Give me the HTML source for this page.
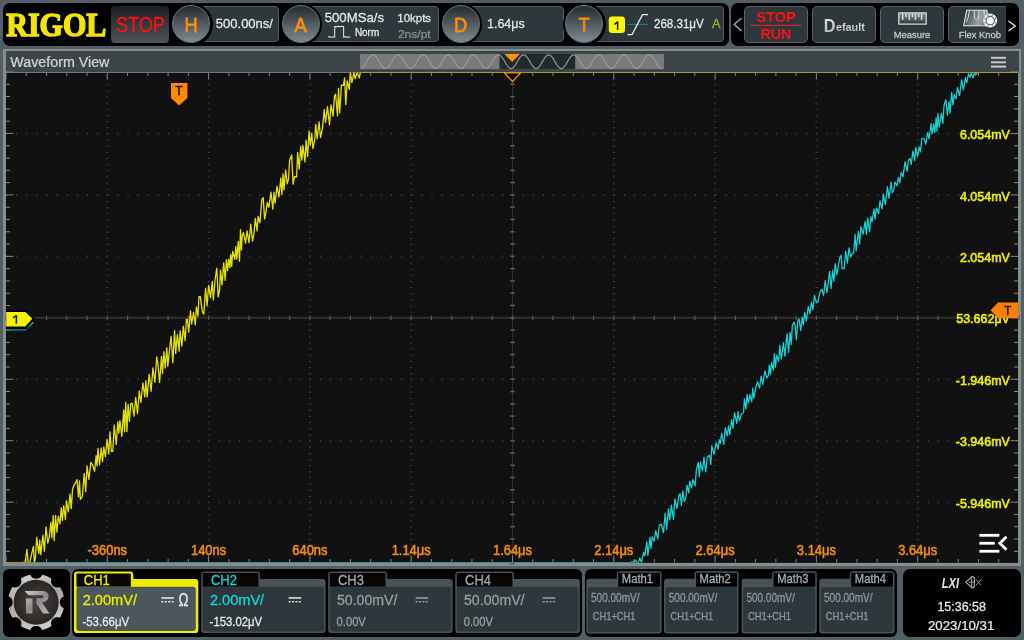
<!DOCTYPE html><html><head><meta charset="utf-8"><title>Rigol Oscilloscope</title><style>
html,body{margin:0;padding:0;}
body{width:1024px;height:640px;overflow:hidden;position:relative;background:#525f65;font-family:"Liberation Sans",sans-serif;}
.a{position:absolute;box-sizing:border-box;}
svg.o{position:absolute;left:0;top:0;width:1024px;height:640px;overflow:visible;will-change:transform;}

</style></head><body>
<div class="a" style="left:3px;top:3px;width:726px;height:42.5px;background:#000;border-radius:7px;"></div>
<div class="a" style="left:731.2px;top:3px;width:287.3px;height:42.5px;background:#000;border-radius:7px;"></div>
<div class="a" style="left:110.5px;top:5.5px;width:58.5px;height:37.5px;border-radius:4px;background:linear-gradient(#1b1f21,#4d5559);"></div>
<div class="a" style="left:198px;top:6px;width:81px;height:36px;border-radius:4px;background:#2e373c;border:1px solid #535e64;"></div>
<div class="a" style="left:290px;top:6px;width:149px;height:36px;border-radius:4px;background:#2e373c;border:1px solid #535e64;"></div>
<div class="a" style="left:450px;top:6px;width:113.5px;height:36px;border-radius:4px;background:#2e373c;border:1px solid #535e64;"></div>
<div class="a" style="left:575px;top:6px;width:148.89999999999998px;height:36px;border-radius:4px;background:#2e373c;border:1px solid #535e64;"></div>
<div class="a" style="left:169.5px;top:2.5px;width:43px;height:43px;border-radius:50%;background:#000;"></div>
<div class="a" style="left:172px;top:5px;width:38px;height:38px;border-radius:50%;background:linear-gradient(#262c30,#7c8a92);border:1px solid #6c777c;"></div>
<div class="a" style="left:279.0px;top:2.5px;width:43px;height:43px;border-radius:50%;background:#000;"></div>
<div class="a" style="left:281.5px;top:5px;width:38px;height:38px;border-radius:50%;background:linear-gradient(#262c30,#7c8a92);border:1px solid #6c777c;"></div>
<div class="a" style="left:439.0px;top:2.5px;width:43px;height:43px;border-radius:50%;background:#000;"></div>
<div class="a" style="left:441.5px;top:5px;width:38px;height:38px;border-radius:50%;background:linear-gradient(#262c30,#7c8a92);border:1px solid #6c777c;"></div>
<div class="a" style="left:562.5px;top:2.5px;width:43px;height:43px;border-radius:50%;background:#000;"></div>
<div class="a" style="left:565px;top:5px;width:38px;height:38px;border-radius:50%;background:linear-gradient(#262c30,#7c8a92);border:1px solid #6c777c;"></div>
<div class="a" style="left:744px;top:5.5px;width:64px;height:37.5px;border-radius:5px;background:#2e373c;border:1px solid #58636a;"></div>
<div class="a" style="left:812px;top:5.5px;width:64px;height:37.5px;border-radius:5px;background:#2e373c;border:1px solid #58636a;"></div>
<div class="a" style="left:880px;top:5.5px;width:64px;height:37.5px;border-radius:5px;background:#2e373c;border:1px solid #58636a;"></div>
<div class="a" style="left:948.4px;top:5.5px;width:65.60000000000002px;height:37.5px;border-radius:5px;background:#2e373c;border:1px solid #58636a;"></div>
<div class="a" style="left:1006px;top:3px;width:12.5px;height:42.5px;background:#000;border-radius:0 7px 7px 0;"></div>
<div class="a" style="left:3px;top:49px;width:1018px;height:516.5px;background:#8a8c8c;"></div>
<div class="a" style="left:5.5px;top:51px;width:1013px;height:21.5px;background:#3e4548;"></div>
<div class="a" style="left:6px;top:72.5px;width:1012px;height:490.5px;background:#111111;"></div>
<div class="a" style="left:3px;top:569px;width:66.5px;height:67.5px;background:#000;border-radius:6px;"></div>
<div class="a" style="left:72px;top:569px;width:509.5px;height:67.5px;background:#000;border-radius:6px;"></div>
<div class="a" style="left:584.5px;top:569px;width:312px;height:67.5px;background:#000;border-radius:6px;"></div>
<div class="a" style="left:902.5px;top:569px;width:118px;height:67.5px;background:#000;border-radius:7px;"></div>
<svg class="o" width="1024" height="640" viewBox="0 0 1024 640">
<line x1="107.30" y1="72.0" x2="107.30" y2="563.6" stroke="#3e3e3e" stroke-width="2" stroke-dasharray="1 5.145"/><line x1="208.60" y1="72.0" x2="208.60" y2="563.6" stroke="#3e3e3e" stroke-width="2" stroke-dasharray="1 5.145"/><line x1="309.90" y1="72.0" x2="309.90" y2="563.6" stroke="#3e3e3e" stroke-width="2" stroke-dasharray="1 5.145"/><line x1="411.20" y1="72.0" x2="411.20" y2="563.6" stroke="#3e3e3e" stroke-width="2" stroke-dasharray="1 5.145"/><line x1="613.80" y1="72.0" x2="613.80" y2="563.6" stroke="#3e3e3e" stroke-width="2" stroke-dasharray="1 5.145"/><line x1="715.10" y1="72.0" x2="715.10" y2="563.6" stroke="#3e3e3e" stroke-width="2" stroke-dasharray="1 5.145"/><line x1="816.40" y1="72.0" x2="816.40" y2="563.6" stroke="#3e3e3e" stroke-width="2" stroke-dasharray="1 5.145"/><line x1="917.70" y1="72.0" x2="917.70" y2="563.6" stroke="#3e3e3e" stroke-width="2" stroke-dasharray="1 5.145"/><line x1="6.0" y1="133.45" x2="1019.0" y2="133.45" stroke="#3e3e3e" stroke-width="2" stroke-dasharray="1 9.130"/><line x1="6.0" y1="194.90" x2="1019.0" y2="194.90" stroke="#3e3e3e" stroke-width="2" stroke-dasharray="1 9.130"/><line x1="6.0" y1="256.35" x2="1019.0" y2="256.35" stroke="#3e3e3e" stroke-width="2" stroke-dasharray="1 9.130"/><line x1="6.0" y1="379.25" x2="1019.0" y2="379.25" stroke="#3e3e3e" stroke-width="2" stroke-dasharray="1 9.130"/><line x1="6.0" y1="440.70" x2="1019.0" y2="440.70" stroke="#3e3e3e" stroke-width="2" stroke-dasharray="1 9.130"/><line x1="6.0" y1="502.15" x2="1019.0" y2="502.15" stroke="#3e3e3e" stroke-width="2" stroke-dasharray="1 9.130"/><line x1="512.50" y1="72.5" x2="512.50" y2="562.5" stroke="#303030" stroke-width="1"/><line x1="6.0" y1="317.80" x2="1018.0" y2="317.80" stroke="#303030" stroke-width="2"/><line x1="6.00" y1="315.50" x2="6.00" y2="320.10" stroke="#585858" stroke-width="1.2"/><line x1="26.26" y1="315.50" x2="26.26" y2="320.10" stroke="#585858" stroke-width="1.2"/><line x1="46.52" y1="315.50" x2="46.52" y2="320.10" stroke="#585858" stroke-width="1.2"/><line x1="66.78" y1="315.50" x2="66.78" y2="320.10" stroke="#585858" stroke-width="1.2"/><line x1="87.04" y1="315.50" x2="87.04" y2="320.10" stroke="#585858" stroke-width="1.2"/><line x1="107.30" y1="315.50" x2="107.30" y2="320.10" stroke="#585858" stroke-width="1.2"/><line x1="127.56" y1="315.50" x2="127.56" y2="320.10" stroke="#585858" stroke-width="1.2"/><line x1="147.82" y1="315.50" x2="147.82" y2="320.10" stroke="#585858" stroke-width="1.2"/><line x1="168.08" y1="315.50" x2="168.08" y2="320.10" stroke="#585858" stroke-width="1.2"/><line x1="188.34" y1="315.50" x2="188.34" y2="320.10" stroke="#585858" stroke-width="1.2"/><line x1="208.60" y1="315.50" x2="208.60" y2="320.10" stroke="#585858" stroke-width="1.2"/><line x1="228.86" y1="315.50" x2="228.86" y2="320.10" stroke="#585858" stroke-width="1.2"/><line x1="249.12" y1="315.50" x2="249.12" y2="320.10" stroke="#585858" stroke-width="1.2"/><line x1="269.38" y1="315.50" x2="269.38" y2="320.10" stroke="#585858" stroke-width="1.2"/><line x1="289.64" y1="315.50" x2="289.64" y2="320.10" stroke="#585858" stroke-width="1.2"/><line x1="309.90" y1="315.50" x2="309.90" y2="320.10" stroke="#585858" stroke-width="1.2"/><line x1="330.16" y1="315.50" x2="330.16" y2="320.10" stroke="#585858" stroke-width="1.2"/><line x1="350.42" y1="315.50" x2="350.42" y2="320.10" stroke="#585858" stroke-width="1.2"/><line x1="370.68" y1="315.50" x2="370.68" y2="320.10" stroke="#585858" stroke-width="1.2"/><line x1="390.94" y1="315.50" x2="390.94" y2="320.10" stroke="#585858" stroke-width="1.2"/><line x1="411.20" y1="315.50" x2="411.20" y2="320.10" stroke="#585858" stroke-width="1.2"/><line x1="431.46" y1="315.50" x2="431.46" y2="320.10" stroke="#585858" stroke-width="1.2"/><line x1="451.72" y1="315.50" x2="451.72" y2="320.10" stroke="#585858" stroke-width="1.2"/><line x1="471.98" y1="315.50" x2="471.98" y2="320.10" stroke="#585858" stroke-width="1.2"/><line x1="492.24" y1="315.50" x2="492.24" y2="320.10" stroke="#585858" stroke-width="1.2"/><line x1="512.50" y1="315.50" x2="512.50" y2="320.10" stroke="#585858" stroke-width="1.2"/><line x1="532.76" y1="315.50" x2="532.76" y2="320.10" stroke="#585858" stroke-width="1.2"/><line x1="553.02" y1="315.50" x2="553.02" y2="320.10" stroke="#585858" stroke-width="1.2"/><line x1="573.28" y1="315.50" x2="573.28" y2="320.10" stroke="#585858" stroke-width="1.2"/><line x1="593.54" y1="315.50" x2="593.54" y2="320.10" stroke="#585858" stroke-width="1.2"/><line x1="613.80" y1="315.50" x2="613.80" y2="320.10" stroke="#585858" stroke-width="1.2"/><line x1="634.06" y1="315.50" x2="634.06" y2="320.10" stroke="#585858" stroke-width="1.2"/><line x1="654.32" y1="315.50" x2="654.32" y2="320.10" stroke="#585858" stroke-width="1.2"/><line x1="674.58" y1="315.50" x2="674.58" y2="320.10" stroke="#585858" stroke-width="1.2"/><line x1="694.84" y1="315.50" x2="694.84" y2="320.10" stroke="#585858" stroke-width="1.2"/><line x1="715.10" y1="315.50" x2="715.10" y2="320.10" stroke="#585858" stroke-width="1.2"/><line x1="735.36" y1="315.50" x2="735.36" y2="320.10" stroke="#585858" stroke-width="1.2"/><line x1="755.62" y1="315.50" x2="755.62" y2="320.10" stroke="#585858" stroke-width="1.2"/><line x1="775.88" y1="315.50" x2="775.88" y2="320.10" stroke="#585858" stroke-width="1.2"/><line x1="796.14" y1="315.50" x2="796.14" y2="320.10" stroke="#585858" stroke-width="1.2"/><line x1="816.40" y1="315.50" x2="816.40" y2="320.10" stroke="#585858" stroke-width="1.2"/><line x1="836.66" y1="315.50" x2="836.66" y2="320.10" stroke="#585858" stroke-width="1.2"/><line x1="856.92" y1="315.50" x2="856.92" y2="320.10" stroke="#585858" stroke-width="1.2"/><line x1="877.18" y1="315.50" x2="877.18" y2="320.10" stroke="#585858" stroke-width="1.2"/><line x1="897.44" y1="315.50" x2="897.44" y2="320.10" stroke="#585858" stroke-width="1.2"/><line x1="917.70" y1="315.50" x2="917.70" y2="320.10" stroke="#585858" stroke-width="1.2"/><line x1="937.96" y1="315.50" x2="937.96" y2="320.10" stroke="#585858" stroke-width="1.2"/><line x1="958.22" y1="315.50" x2="958.22" y2="320.10" stroke="#585858" stroke-width="1.2"/><line x1="978.48" y1="315.50" x2="978.48" y2="320.10" stroke="#585858" stroke-width="1.2"/><line x1="998.74" y1="315.50" x2="998.74" y2="320.10" stroke="#585858" stroke-width="1.2"/><line x1="1019.00" y1="315.50" x2="1019.00" y2="320.10" stroke="#585858" stroke-width="1.2"/><line x1="510.20" y1="72.00" x2="514.80" y2="72.00" stroke="#585858" stroke-width="1.6"/><line x1="510.20" y1="84.29" x2="514.80" y2="84.29" stroke="#585858" stroke-width="1.6"/><line x1="510.20" y1="96.58" x2="514.80" y2="96.58" stroke="#585858" stroke-width="1.6"/><line x1="510.20" y1="108.87" x2="514.80" y2="108.87" stroke="#585858" stroke-width="1.6"/><line x1="510.20" y1="121.16" x2="514.80" y2="121.16" stroke="#585858" stroke-width="1.6"/><line x1="510.20" y1="133.45" x2="514.80" y2="133.45" stroke="#585858" stroke-width="1.6"/><line x1="510.20" y1="145.74" x2="514.80" y2="145.74" stroke="#585858" stroke-width="1.6"/><line x1="510.20" y1="158.03" x2="514.80" y2="158.03" stroke="#585858" stroke-width="1.6"/><line x1="510.20" y1="170.32" x2="514.80" y2="170.32" stroke="#585858" stroke-width="1.6"/><line x1="510.20" y1="182.61" x2="514.80" y2="182.61" stroke="#585858" stroke-width="1.6"/><line x1="510.20" y1="194.90" x2="514.80" y2="194.90" stroke="#585858" stroke-width="1.6"/><line x1="510.20" y1="207.19" x2="514.80" y2="207.19" stroke="#585858" stroke-width="1.6"/><line x1="510.20" y1="219.48" x2="514.80" y2="219.48" stroke="#585858" stroke-width="1.6"/><line x1="510.20" y1="231.77" x2="514.80" y2="231.77" stroke="#585858" stroke-width="1.6"/><line x1="510.20" y1="244.06" x2="514.80" y2="244.06" stroke="#585858" stroke-width="1.6"/><line x1="510.20" y1="256.35" x2="514.80" y2="256.35" stroke="#585858" stroke-width="1.6"/><line x1="510.20" y1="268.64" x2="514.80" y2="268.64" stroke="#585858" stroke-width="1.6"/><line x1="510.20" y1="280.93" x2="514.80" y2="280.93" stroke="#585858" stroke-width="1.6"/><line x1="510.20" y1="293.22" x2="514.80" y2="293.22" stroke="#585858" stroke-width="1.6"/><line x1="510.20" y1="305.51" x2="514.80" y2="305.51" stroke="#585858" stroke-width="1.6"/><line x1="510.20" y1="317.80" x2="514.80" y2="317.80" stroke="#585858" stroke-width="1.6"/><line x1="510.20" y1="330.09" x2="514.80" y2="330.09" stroke="#585858" stroke-width="1.6"/><line x1="510.20" y1="342.38" x2="514.80" y2="342.38" stroke="#585858" stroke-width="1.6"/><line x1="510.20" y1="354.67" x2="514.80" y2="354.67" stroke="#585858" stroke-width="1.6"/><line x1="510.20" y1="366.96" x2="514.80" y2="366.96" stroke="#585858" stroke-width="1.6"/><line x1="510.20" y1="379.25" x2="514.80" y2="379.25" stroke="#585858" stroke-width="1.6"/><line x1="510.20" y1="391.54" x2="514.80" y2="391.54" stroke="#585858" stroke-width="1.6"/><line x1="510.20" y1="403.83" x2="514.80" y2="403.83" stroke="#585858" stroke-width="1.6"/><line x1="510.20" y1="416.12" x2="514.80" y2="416.12" stroke="#585858" stroke-width="1.6"/><line x1="510.20" y1="428.41" x2="514.80" y2="428.41" stroke="#585858" stroke-width="1.6"/><line x1="510.20" y1="440.70" x2="514.80" y2="440.70" stroke="#585858" stroke-width="1.6"/><line x1="510.20" y1="452.99" x2="514.80" y2="452.99" stroke="#585858" stroke-width="1.6"/><line x1="510.20" y1="465.28" x2="514.80" y2="465.28" stroke="#585858" stroke-width="1.6"/><line x1="510.20" y1="477.57" x2="514.80" y2="477.57" stroke="#585858" stroke-width="1.6"/><line x1="510.20" y1="489.86" x2="514.80" y2="489.86" stroke="#585858" stroke-width="1.6"/><line x1="510.20" y1="502.15" x2="514.80" y2="502.15" stroke="#585858" stroke-width="1.6"/><line x1="510.20" y1="514.44" x2="514.80" y2="514.44" stroke="#585858" stroke-width="1.6"/><line x1="510.20" y1="526.73" x2="514.80" y2="526.73" stroke="#585858" stroke-width="1.6"/><line x1="510.20" y1="539.02" x2="514.80" y2="539.02" stroke="#585858" stroke-width="1.6"/><line x1="510.20" y1="551.31" x2="514.80" y2="551.31" stroke="#585858" stroke-width="1.6"/><line x1="510.20" y1="563.60" x2="514.80" y2="563.60" stroke="#585858" stroke-width="1.6"/><line x1="6.00" y1="72.5" x2="6.00" y2="79.50" stroke="#858585" stroke-width="1"/><line x1="6.00" y1="562.5" x2="6.00" y2="555.50" stroke="#858585" stroke-width="1"/><line x1="26.26" y1="72.5" x2="26.26" y2="76.00" stroke="#858585" stroke-width="1"/><line x1="26.26" y1="562.5" x2="26.26" y2="559.00" stroke="#858585" stroke-width="1"/><line x1="46.52" y1="72.5" x2="46.52" y2="76.00" stroke="#858585" stroke-width="1"/><line x1="46.52" y1="562.5" x2="46.52" y2="559.00" stroke="#858585" stroke-width="1"/><line x1="66.78" y1="72.5" x2="66.78" y2="76.00" stroke="#858585" stroke-width="1"/><line x1="66.78" y1="562.5" x2="66.78" y2="559.00" stroke="#858585" stroke-width="1"/><line x1="87.04" y1="72.5" x2="87.04" y2="76.00" stroke="#858585" stroke-width="1"/><line x1="87.04" y1="562.5" x2="87.04" y2="559.00" stroke="#858585" stroke-width="1"/><line x1="107.30" y1="72.5" x2="107.30" y2="79.50" stroke="#858585" stroke-width="1"/><line x1="107.30" y1="562.5" x2="107.30" y2="555.50" stroke="#858585" stroke-width="1"/><line x1="127.56" y1="72.5" x2="127.56" y2="76.00" stroke="#858585" stroke-width="1"/><line x1="127.56" y1="562.5" x2="127.56" y2="559.00" stroke="#858585" stroke-width="1"/><line x1="147.82" y1="72.5" x2="147.82" y2="76.00" stroke="#858585" stroke-width="1"/><line x1="147.82" y1="562.5" x2="147.82" y2="559.00" stroke="#858585" stroke-width="1"/><line x1="168.08" y1="72.5" x2="168.08" y2="76.00" stroke="#858585" stroke-width="1"/><line x1="168.08" y1="562.5" x2="168.08" y2="559.00" stroke="#858585" stroke-width="1"/><line x1="188.34" y1="72.5" x2="188.34" y2="76.00" stroke="#858585" stroke-width="1"/><line x1="188.34" y1="562.5" x2="188.34" y2="559.00" stroke="#858585" stroke-width="1"/><line x1="208.60" y1="72.5" x2="208.60" y2="79.50" stroke="#858585" stroke-width="1"/><line x1="208.60" y1="562.5" x2="208.60" y2="555.50" stroke="#858585" stroke-width="1"/><line x1="228.86" y1="72.5" x2="228.86" y2="76.00" stroke="#858585" stroke-width="1"/><line x1="228.86" y1="562.5" x2="228.86" y2="559.00" stroke="#858585" stroke-width="1"/><line x1="249.12" y1="72.5" x2="249.12" y2="76.00" stroke="#858585" stroke-width="1"/><line x1="249.12" y1="562.5" x2="249.12" y2="559.00" stroke="#858585" stroke-width="1"/><line x1="269.38" y1="72.5" x2="269.38" y2="76.00" stroke="#858585" stroke-width="1"/><line x1="269.38" y1="562.5" x2="269.38" y2="559.00" stroke="#858585" stroke-width="1"/><line x1="289.64" y1="72.5" x2="289.64" y2="76.00" stroke="#858585" stroke-width="1"/><line x1="289.64" y1="562.5" x2="289.64" y2="559.00" stroke="#858585" stroke-width="1"/><line x1="309.90" y1="72.5" x2="309.90" y2="79.50" stroke="#858585" stroke-width="1"/><line x1="309.90" y1="562.5" x2="309.90" y2="555.50" stroke="#858585" stroke-width="1"/><line x1="330.16" y1="72.5" x2="330.16" y2="76.00" stroke="#858585" stroke-width="1"/><line x1="330.16" y1="562.5" x2="330.16" y2="559.00" stroke="#858585" stroke-width="1"/><line x1="350.42" y1="72.5" x2="350.42" y2="76.00" stroke="#858585" stroke-width="1"/><line x1="350.42" y1="562.5" x2="350.42" y2="559.00" stroke="#858585" stroke-width="1"/><line x1="370.68" y1="72.5" x2="370.68" y2="76.00" stroke="#858585" stroke-width="1"/><line x1="370.68" y1="562.5" x2="370.68" y2="559.00" stroke="#858585" stroke-width="1"/><line x1="390.94" y1="72.5" x2="390.94" y2="76.00" stroke="#858585" stroke-width="1"/><line x1="390.94" y1="562.5" x2="390.94" y2="559.00" stroke="#858585" stroke-width="1"/><line x1="411.20" y1="72.5" x2="411.20" y2="79.50" stroke="#858585" stroke-width="1"/><line x1="411.20" y1="562.5" x2="411.20" y2="555.50" stroke="#858585" stroke-width="1"/><line x1="431.46" y1="72.5" x2="431.46" y2="76.00" stroke="#858585" stroke-width="1"/><line x1="431.46" y1="562.5" x2="431.46" y2="559.00" stroke="#858585" stroke-width="1"/><line x1="451.72" y1="72.5" x2="451.72" y2="76.00" stroke="#858585" stroke-width="1"/><line x1="451.72" y1="562.5" x2="451.72" y2="559.00" stroke="#858585" stroke-width="1"/><line x1="471.98" y1="72.5" x2="471.98" y2="76.00" stroke="#858585" stroke-width="1"/><line x1="471.98" y1="562.5" x2="471.98" y2="559.00" stroke="#858585" stroke-width="1"/><line x1="492.24" y1="72.5" x2="492.24" y2="76.00" stroke="#858585" stroke-width="1"/><line x1="492.24" y1="562.5" x2="492.24" y2="559.00" stroke="#858585" stroke-width="1"/><line x1="512.50" y1="72.5" x2="512.50" y2="79.50" stroke="#858585" stroke-width="1"/><line x1="512.50" y1="562.5" x2="512.50" y2="555.50" stroke="#858585" stroke-width="1"/><line x1="532.76" y1="72.5" x2="532.76" y2="76.00" stroke="#858585" stroke-width="1"/><line x1="532.76" y1="562.5" x2="532.76" y2="559.00" stroke="#858585" stroke-width="1"/><line x1="553.02" y1="72.5" x2="553.02" y2="76.00" stroke="#858585" stroke-width="1"/><line x1="553.02" y1="562.5" x2="553.02" y2="559.00" stroke="#858585" stroke-width="1"/><line x1="573.28" y1="72.5" x2="573.28" y2="76.00" stroke="#858585" stroke-width="1"/><line x1="573.28" y1="562.5" x2="573.28" y2="559.00" stroke="#858585" stroke-width="1"/><line x1="593.54" y1="72.5" x2="593.54" y2="76.00" stroke="#858585" stroke-width="1"/><line x1="593.54" y1="562.5" x2="593.54" y2="559.00" stroke="#858585" stroke-width="1"/><line x1="613.80" y1="72.5" x2="613.80" y2="79.50" stroke="#858585" stroke-width="1"/><line x1="613.80" y1="562.5" x2="613.80" y2="555.50" stroke="#858585" stroke-width="1"/><line x1="634.06" y1="72.5" x2="634.06" y2="76.00" stroke="#858585" stroke-width="1"/><line x1="634.06" y1="562.5" x2="634.06" y2="559.00" stroke="#858585" stroke-width="1"/><line x1="654.32" y1="72.5" x2="654.32" y2="76.00" stroke="#858585" stroke-width="1"/><line x1="654.32" y1="562.5" x2="654.32" y2="559.00" stroke="#858585" stroke-width="1"/><line x1="674.58" y1="72.5" x2="674.58" y2="76.00" stroke="#858585" stroke-width="1"/><line x1="674.58" y1="562.5" x2="674.58" y2="559.00" stroke="#858585" stroke-width="1"/><line x1="694.84" y1="72.5" x2="694.84" y2="76.00" stroke="#858585" stroke-width="1"/><line x1="694.84" y1="562.5" x2="694.84" y2="559.00" stroke="#858585" stroke-width="1"/><line x1="715.10" y1="72.5" x2="715.10" y2="79.50" stroke="#858585" stroke-width="1"/><line x1="715.10" y1="562.5" x2="715.10" y2="555.50" stroke="#858585" stroke-width="1"/><line x1="735.36" y1="72.5" x2="735.36" y2="76.00" stroke="#858585" stroke-width="1"/><line x1="735.36" y1="562.5" x2="735.36" y2="559.00" stroke="#858585" stroke-width="1"/><line x1="755.62" y1="72.5" x2="755.62" y2="76.00" stroke="#858585" stroke-width="1"/><line x1="755.62" y1="562.5" x2="755.62" y2="559.00" stroke="#858585" stroke-width="1"/><line x1="775.88" y1="72.5" x2="775.88" y2="76.00" stroke="#858585" stroke-width="1"/><line x1="775.88" y1="562.5" x2="775.88" y2="559.00" stroke="#858585" stroke-width="1"/><line x1="796.14" y1="72.5" x2="796.14" y2="76.00" stroke="#858585" stroke-width="1"/><line x1="796.14" y1="562.5" x2="796.14" y2="559.00" stroke="#858585" stroke-width="1"/><line x1="816.40" y1="72.5" x2="816.40" y2="79.50" stroke="#858585" stroke-width="1"/><line x1="816.40" y1="562.5" x2="816.40" y2="555.50" stroke="#858585" stroke-width="1"/><line x1="836.66" y1="72.5" x2="836.66" y2="76.00" stroke="#858585" stroke-width="1"/><line x1="836.66" y1="562.5" x2="836.66" y2="559.00" stroke="#858585" stroke-width="1"/><line x1="856.92" y1="72.5" x2="856.92" y2="76.00" stroke="#858585" stroke-width="1"/><line x1="856.92" y1="562.5" x2="856.92" y2="559.00" stroke="#858585" stroke-width="1"/><line x1="877.18" y1="72.5" x2="877.18" y2="76.00" stroke="#858585" stroke-width="1"/><line x1="877.18" y1="562.5" x2="877.18" y2="559.00" stroke="#858585" stroke-width="1"/><line x1="897.44" y1="72.5" x2="897.44" y2="76.00" stroke="#858585" stroke-width="1"/><line x1="897.44" y1="562.5" x2="897.44" y2="559.00" stroke="#858585" stroke-width="1"/><line x1="917.70" y1="72.5" x2="917.70" y2="79.50" stroke="#858585" stroke-width="1"/><line x1="917.70" y1="562.5" x2="917.70" y2="555.50" stroke="#858585" stroke-width="1"/><line x1="937.96" y1="72.5" x2="937.96" y2="76.00" stroke="#858585" stroke-width="1"/><line x1="937.96" y1="562.5" x2="937.96" y2="559.00" stroke="#858585" stroke-width="1"/><line x1="958.22" y1="72.5" x2="958.22" y2="76.00" stroke="#858585" stroke-width="1"/><line x1="958.22" y1="562.5" x2="958.22" y2="559.00" stroke="#858585" stroke-width="1"/><line x1="978.48" y1="72.5" x2="978.48" y2="76.00" stroke="#858585" stroke-width="1"/><line x1="978.48" y1="562.5" x2="978.48" y2="559.00" stroke="#858585" stroke-width="1"/><line x1="998.74" y1="72.5" x2="998.74" y2="76.00" stroke="#858585" stroke-width="1"/><line x1="998.74" y1="562.5" x2="998.74" y2="559.00" stroke="#858585" stroke-width="1"/><line x1="1019.00" y1="72.5" x2="1019.00" y2="79.50" stroke="#858585" stroke-width="1"/><line x1="1019.00" y1="562.5" x2="1019.00" y2="555.50" stroke="#858585" stroke-width="1"/><line x1="6.0" y1="72.00" x2="13.50" y2="72.00" stroke="#858585" stroke-width="1"/><line x1="1018.0" y1="72.00" x2="1010.50" y2="72.00" stroke="#858585" stroke-width="1"/><line x1="6.0" y1="84.29" x2="10.00" y2="84.29" stroke="#858585" stroke-width="1"/><line x1="1018.0" y1="84.29" x2="1014.00" y2="84.29" stroke="#858585" stroke-width="1"/><line x1="6.0" y1="96.58" x2="10.00" y2="96.58" stroke="#858585" stroke-width="1"/><line x1="1018.0" y1="96.58" x2="1014.00" y2="96.58" stroke="#858585" stroke-width="1"/><line x1="6.0" y1="108.87" x2="10.00" y2="108.87" stroke="#858585" stroke-width="1"/><line x1="1018.0" y1="108.87" x2="1014.00" y2="108.87" stroke="#858585" stroke-width="1"/><line x1="6.0" y1="121.16" x2="10.00" y2="121.16" stroke="#858585" stroke-width="1"/><line x1="1018.0" y1="121.16" x2="1014.00" y2="121.16" stroke="#858585" stroke-width="1"/><line x1="6.0" y1="133.45" x2="13.50" y2="133.45" stroke="#858585" stroke-width="1"/><line x1="1018.0" y1="133.45" x2="1010.50" y2="133.45" stroke="#858585" stroke-width="1"/><line x1="6.0" y1="145.74" x2="10.00" y2="145.74" stroke="#858585" stroke-width="1"/><line x1="1018.0" y1="145.74" x2="1014.00" y2="145.74" stroke="#858585" stroke-width="1"/><line x1="6.0" y1="158.03" x2="10.00" y2="158.03" stroke="#858585" stroke-width="1"/><line x1="1018.0" y1="158.03" x2="1014.00" y2="158.03" stroke="#858585" stroke-width="1"/><line x1="6.0" y1="170.32" x2="10.00" y2="170.32" stroke="#858585" stroke-width="1"/><line x1="1018.0" y1="170.32" x2="1014.00" y2="170.32" stroke="#858585" stroke-width="1"/><line x1="6.0" y1="182.61" x2="10.00" y2="182.61" stroke="#858585" stroke-width="1"/><line x1="1018.0" y1="182.61" x2="1014.00" y2="182.61" stroke="#858585" stroke-width="1"/><line x1="6.0" y1="194.90" x2="13.50" y2="194.90" stroke="#858585" stroke-width="1"/><line x1="1018.0" y1="194.90" x2="1010.50" y2="194.90" stroke="#858585" stroke-width="1"/><line x1="6.0" y1="207.19" x2="10.00" y2="207.19" stroke="#858585" stroke-width="1"/><line x1="1018.0" y1="207.19" x2="1014.00" y2="207.19" stroke="#858585" stroke-width="1"/><line x1="6.0" y1="219.48" x2="10.00" y2="219.48" stroke="#858585" stroke-width="1"/><line x1="1018.0" y1="219.48" x2="1014.00" y2="219.48" stroke="#858585" stroke-width="1"/><line x1="6.0" y1="231.77" x2="10.00" y2="231.77" stroke="#858585" stroke-width="1"/><line x1="1018.0" y1="231.77" x2="1014.00" y2="231.77" stroke="#858585" stroke-width="1"/><line x1="6.0" y1="244.06" x2="10.00" y2="244.06" stroke="#858585" stroke-width="1"/><line x1="1018.0" y1="244.06" x2="1014.00" y2="244.06" stroke="#858585" stroke-width="1"/><line x1="6.0" y1="256.35" x2="13.50" y2="256.35" stroke="#858585" stroke-width="1"/><line x1="1018.0" y1="256.35" x2="1010.50" y2="256.35" stroke="#858585" stroke-width="1"/><line x1="6.0" y1="268.64" x2="10.00" y2="268.64" stroke="#858585" stroke-width="1"/><line x1="1018.0" y1="268.64" x2="1014.00" y2="268.64" stroke="#858585" stroke-width="1"/><line x1="6.0" y1="280.93" x2="10.00" y2="280.93" stroke="#858585" stroke-width="1"/><line x1="1018.0" y1="280.93" x2="1014.00" y2="280.93" stroke="#858585" stroke-width="1"/><line x1="6.0" y1="293.22" x2="10.00" y2="293.22" stroke="#858585" stroke-width="1"/><line x1="1018.0" y1="293.22" x2="1014.00" y2="293.22" stroke="#858585" stroke-width="1"/><line x1="6.0" y1="305.51" x2="10.00" y2="305.51" stroke="#858585" stroke-width="1"/><line x1="1018.0" y1="305.51" x2="1014.00" y2="305.51" stroke="#858585" stroke-width="1"/><line x1="6.0" y1="317.80" x2="13.50" y2="317.80" stroke="#858585" stroke-width="1"/><line x1="1018.0" y1="317.80" x2="1010.50" y2="317.80" stroke="#858585" stroke-width="1"/><line x1="6.0" y1="330.09" x2="10.00" y2="330.09" stroke="#858585" stroke-width="1"/><line x1="1018.0" y1="330.09" x2="1014.00" y2="330.09" stroke="#858585" stroke-width="1"/><line x1="6.0" y1="342.38" x2="10.00" y2="342.38" stroke="#858585" stroke-width="1"/><line x1="1018.0" y1="342.38" x2="1014.00" y2="342.38" stroke="#858585" stroke-width="1"/><line x1="6.0" y1="354.67" x2="10.00" y2="354.67" stroke="#858585" stroke-width="1"/><line x1="1018.0" y1="354.67" x2="1014.00" y2="354.67" stroke="#858585" stroke-width="1"/><line x1="6.0" y1="366.96" x2="10.00" y2="366.96" stroke="#858585" stroke-width="1"/><line x1="1018.0" y1="366.96" x2="1014.00" y2="366.96" stroke="#858585" stroke-width="1"/><line x1="6.0" y1="379.25" x2="13.50" y2="379.25" stroke="#858585" stroke-width="1"/><line x1="1018.0" y1="379.25" x2="1010.50" y2="379.25" stroke="#858585" stroke-width="1"/><line x1="6.0" y1="391.54" x2="10.00" y2="391.54" stroke="#858585" stroke-width="1"/><line x1="1018.0" y1="391.54" x2="1014.00" y2="391.54" stroke="#858585" stroke-width="1"/><line x1="6.0" y1="403.83" x2="10.00" y2="403.83" stroke="#858585" stroke-width="1"/><line x1="1018.0" y1="403.83" x2="1014.00" y2="403.83" stroke="#858585" stroke-width="1"/><line x1="6.0" y1="416.12" x2="10.00" y2="416.12" stroke="#858585" stroke-width="1"/><line x1="1018.0" y1="416.12" x2="1014.00" y2="416.12" stroke="#858585" stroke-width="1"/><line x1="6.0" y1="428.41" x2="10.00" y2="428.41" stroke="#858585" stroke-width="1"/><line x1="1018.0" y1="428.41" x2="1014.00" y2="428.41" stroke="#858585" stroke-width="1"/><line x1="6.0" y1="440.70" x2="13.50" y2="440.70" stroke="#858585" stroke-width="1"/><line x1="1018.0" y1="440.70" x2="1010.50" y2="440.70" stroke="#858585" stroke-width="1"/><line x1="6.0" y1="452.99" x2="10.00" y2="452.99" stroke="#858585" stroke-width="1"/><line x1="1018.0" y1="452.99" x2="1014.00" y2="452.99" stroke="#858585" stroke-width="1"/><line x1="6.0" y1="465.28" x2="10.00" y2="465.28" stroke="#858585" stroke-width="1"/><line x1="1018.0" y1="465.28" x2="1014.00" y2="465.28" stroke="#858585" stroke-width="1"/><line x1="6.0" y1="477.57" x2="10.00" y2="477.57" stroke="#858585" stroke-width="1"/><line x1="1018.0" y1="477.57" x2="1014.00" y2="477.57" stroke="#858585" stroke-width="1"/><line x1="6.0" y1="489.86" x2="10.00" y2="489.86" stroke="#858585" stroke-width="1"/><line x1="1018.0" y1="489.86" x2="1014.00" y2="489.86" stroke="#858585" stroke-width="1"/><line x1="6.0" y1="502.15" x2="13.50" y2="502.15" stroke="#858585" stroke-width="1"/><line x1="1018.0" y1="502.15" x2="1010.50" y2="502.15" stroke="#858585" stroke-width="1"/><line x1="6.0" y1="514.44" x2="10.00" y2="514.44" stroke="#858585" stroke-width="1"/><line x1="1018.0" y1="514.44" x2="1014.00" y2="514.44" stroke="#858585" stroke-width="1"/><line x1="6.0" y1="526.73" x2="10.00" y2="526.73" stroke="#858585" stroke-width="1"/><line x1="1018.0" y1="526.73" x2="1014.00" y2="526.73" stroke="#858585" stroke-width="1"/><line x1="6.0" y1="539.02" x2="10.00" y2="539.02" stroke="#858585" stroke-width="1"/><line x1="1018.0" y1="539.02" x2="1014.00" y2="539.02" stroke="#858585" stroke-width="1"/><line x1="6.0" y1="551.31" x2="10.00" y2="551.31" stroke="#858585" stroke-width="1"/><line x1="1018.0" y1="551.31" x2="1014.00" y2="551.31" stroke="#858585" stroke-width="1"/><line x1="6.0" y1="563.60" x2="13.50" y2="563.60" stroke="#858585" stroke-width="1"/><line x1="1018.0" y1="563.60" x2="1010.50" y2="563.60" stroke="#858585" stroke-width="1"/><line x1="6.0" y1="72.5" x2="1018.0" y2="72.5" stroke="#9a9a9a" stroke-width="1"/><defs><clipPath id="pclip"><rect x="6.0" y="72.0" width="1012.0" height="491.0"/></clipPath></defs><polyline points="6.0,562.6 7.1,562.6 8.7,562.6 9.7,562.6 11.0,562.6 12.5,562.6 13.8,562.6 15.8,562.6 17.2,562.6 18.4,562.6 20.2,562.6 22.0,562.6 24.1,562.6 25.2,562.6 26.8,562.6 28.5,562.6 30.2,562.6 32.4,562.6 34.2,562.6 35.6,562.6 37.1,562.6 39.0,562.6 41.1,562.6 43.2,562.6 44.7,562.6 45.9,562.6 47.4,562.6 48.9,562.6 50.8,562.6 51.8,562.6 53.8,562.6 55.6,562.6 56.7,562.6 57.9,562.6 60.0,562.6 61.4,562.6 63.6,562.6 64.7,562.6 65.9,562.6 67.0,562.6 69.2,562.6 70.6,562.6 72.6,562.6 74.8,562.6 76.7,562.6 77.7,562.6 79.6,562.6 81.8,562.6 83.0,562.6 85.2,562.6 87.1,562.6 89.1,562.6 91.1,562.6 92.5,562.6 93.7,562.6 95.7,562.6 97.5,562.6 98.5,562.6 100.6,562.6 101.9,562.6 103.6,562.6 105.7,562.6 107.8,562.6 109.5,562.6 110.7,562.6 112.2,562.6 113.9,562.6 115.5,562.6 117.1,562.6 118.7,562.6 120.5,562.6 122.7,562.6 124.0,562.6 125.1,562.6 126.4,562.6 128.5,562.6 129.6,562.6 131.8,562.6 133.8,562.6 135.2,562.6 136.2,562.6 137.6,562.6 139.8,562.6 141.1,562.6 142.2,562.6 143.5,562.6 145.4,562.6 146.9,562.6 148.9,562.6 150.9,562.6 153.1,562.6 154.4,562.6 155.6,562.6 156.9,562.6 157.9,562.6 159.6,562.6 160.7,562.6 162.7,562.6 164.9,562.6 166.7,562.6 167.8,562.6 169.0,562.6 170.8,562.6 172.3,562.6 174.5,562.6 176.7,562.6 178.2,562.6 179.8,562.6 181.2,562.6 182.5,562.6 184.3,562.6 185.7,562.6 187.5,562.6 189.2,562.6 190.9,562.6 192.9,562.6 194.7,562.6 196.1,562.6 197.9,562.6 198.9,562.6 200.5,562.6 201.8,562.6 203.0,562.6 204.5,562.6 206.2,562.6 207.5,562.6 208.5,562.6 210.3,562.6 211.9,562.6 213.1,562.6 214.6,562.6 216.0,562.6 217.7,562.6 218.8,562.6 220.6,562.6 221.6,562.6 223.0,562.6 225.0,562.6 226.1,562.6 227.5,562.6 229.2,562.6 230.2,562.6 232.4,562.6 233.6,562.6 235.6,562.6 237.2,562.6 238.8,562.6 239.8,562.6 241.2,562.6 242.5,562.6 243.9,562.6 246.1,562.6 248.3,562.6 249.4,562.6 250.7,562.6 252.2,562.6 253.5,562.6 254.7,562.6 255.9,562.6 257.4,562.6 258.4,562.6 260.0,562.6 262.1,562.6 263.4,562.6 265.2,562.6 267.2,562.6 269.1,562.6 270.5,562.6 272.3,562.6 274.1,562.6 275.0,562.6 276.8,562.6 278.1,562.6 279.1,562.6 280.4,562.6 281.4,562.6 282.6,562.6 283.8,562.6 285.1,562.6 287.2,562.6 288.7,562.6 290.2,562.6 291.2,562.6 293.3,562.6 294.7,562.6 295.7,562.6 297.1,562.6 298.5,562.6 299.7,562.6 301.2,562.6 303.4,562.6 304.4,562.6 305.4,562.6 306.7,562.6 308.0,562.6 309.9,562.6 311.8,562.6 312.8,562.6 315.0,562.6 316.5,562.6 318.4,562.6 319.8,562.6 320.9,562.6 321.9,562.6 324.1,562.6 325.2,562.6 326.7,562.6 328.6,562.6 329.7,562.6 331.1,562.6 332.4,562.6 333.8,562.6 335.0,562.6 336.1,562.6 338.3,562.6 339.5,562.6 340.9,562.6 342.8,562.6 344.6,562.6 345.8,562.6 347.0,562.6 348.2,562.6 349.9,562.6 351.6,562.6 353.4,562.6 355.6,562.6 357.1,562.6 358.3,562.6 360.4,562.6 362.5,562.6 364.2,562.6 365.9,562.6 367.2,562.6 368.8,562.6 370.0,562.6 371.0,562.6 372.7,562.6 374.0,562.6 375.2,562.6 376.6,562.6 378.7,562.6 379.7,562.6 381.4,562.6 383.1,562.6 384.6,562.6 385.9,562.6 387.1,562.6 388.6,562.6 389.6,562.6 391.6,562.6 393.0,562.6 395.2,562.6 397.5,562.6 398.6,562.6 400.0,562.6 401.4,562.6 403.5,562.6 404.9,562.6 407.0,562.6 409.0,562.6 410.4,562.6 412.5,562.6 414.0,562.6 415.7,562.6 416.8,562.6 418.1,562.6 419.9,562.6 421.1,562.6 423.2,562.6 424.2,562.6 425.6,562.6 426.8,562.6 429.0,562.6 430.8,562.6 432.1,562.6 433.5,562.6 435.4,562.6 437.0,562.6 439.0,562.6 440.1,562.6 441.9,562.6 443.2,562.6 445.1,562.6 446.7,562.6 447.8,562.6 449.7,562.6 451.0,562.6 452.6,562.6 453.8,562.6 455.1,562.6 456.5,562.6 458.6,562.6 460.8,562.6 462.9,562.6 464.2,562.6 466.4,562.6 468.5,562.6 469.5,562.6 471.4,562.6 473.4,562.6 475.5,562.6 476.7,562.6 478.7,562.6 480.0,562.6 481.3,562.6 482.6,562.6 483.9,562.6 485.7,562.6 487.6,562.6 488.9,562.6 490.0,562.6 492.3,562.6 494.2,562.6 496.3,562.6 497.5,562.6 499.3,562.6 501.2,562.6 502.7,562.6 503.7,562.6 505.3,562.6 506.8,562.6 508.6,562.6 510.7,562.6 512.2,562.6 513.7,562.6 515.1,562.6 516.3,562.6 517.4,562.6 519.3,562.6 520.8,562.6 522.3,562.6 523.5,562.6 525.5,562.6 527.0,562.6 528.9,562.6 530.9,562.6 532.9,562.6 534.8,562.6 536.5,562.6 538.4,562.6 540.0,562.6 542.1,562.6 543.6,562.6 545.2,562.6 546.8,562.6 548.7,562.6 550.3,562.6 552.2,562.6 554.4,562.6 555.9,562.6 557.7,562.6 559.6,562.6 561.6,562.6 563.6,562.6 565.3,562.6 567.0,562.6 568.4,562.6 569.8,562.6 571.1,562.6 573.0,562.6 574.5,562.6 576.0,562.6 578.0,562.6 580.0,562.6 582.2,562.6 583.3,562.6 584.5,562.6 586.6,562.6 588.7,562.6 590.5,562.6 592.6,562.6 593.8,562.6 594.9,562.6 597.0,562.6 598.6,562.6 600.1,562.6 601.9,562.6 604.1,562.6 605.6,562.6 607.4,562.6 609.0,562.6 610.5,562.6 611.8,562.6 613.1,562.6 615.1,562.6 616.8,562.6 618.7,562.6 620.0,562.6 621.8,562.6 623.5,562.6 625.3,562.6 626.8,562.6 627.8,562.6 629.2,562.6 630.5,562.6 632.0,561.8 633.7,562.6 635.4,560.2 636.9,562.6 638.4,562.6 639.7,558.0 641.5,562.6 643.6,552.3 644.9,555.9 646.8,541.9 647.9,555.4 650.0,537.2 651.0,548.4 652.1,536.7 654.1,541.3 655.8,530.6 657.8,539.0 659.3,525.2 661.3,524.1 663.5,532.9 665.2,513.2 666.6,529.5 668.4,508.8 669.7,519.9 671.4,505.1 673.5,519.6 674.8,498.9 676.9,508.6 678.9,495.6 680.1,493.7 681.4,505.3 682.9,491.0 684.2,501.4 685.8,498.0 687.0,485.1 688.7,492.9 689.7,481.1 691.5,488.0 692.9,479.6 695.1,485.8 696.4,469.8 698.3,462.5 699.3,476.5 700.4,462.2 702.5,470.8 704.0,457.2 705.7,471.8 707.2,457.2 709.4,455.2 710.8,464.4 711.8,445.6 714.0,454.2 716.2,442.8 718.1,449.0 719.3,439.7 720.4,443.5 721.6,433.3 723.8,444.5 725.3,427.6 727.1,436.0 728.6,425.9 729.7,434.4 731.7,419.7 733.0,428.2 734.6,412.6 736.8,423.5 738.1,411.5 739.3,420.6 741.4,414.0 742.5,413.2 743.5,412.7 744.4,399.0 745.9,408.9 747.1,394.3 748.3,403.2 749.9,394.7 751.7,401.7 752.8,388.0 753.8,398.1 755.9,387.0 757.5,381.6 759.5,388.0 761.2,376.2 762.8,384.3 764.9,370.9 766.8,377.9 768.4,375.4 769.4,365.2 770.5,374.6 771.6,362.3 773.3,370.0 774.4,353.6 775.5,367.1 776.6,355.2 778.7,361.3 779.8,345.4 781.3,358.9 783.5,342.7 784.9,356.3 787.0,333.8 788.6,352.4 790.1,332.4 791.2,344.3 792.3,325.8 794.1,322.1 795.1,326.0 796.4,339.8 797.7,321.4 799.0,318.9 800.7,330.6 802.3,317.1 803.4,324.8 804.7,312.3 806.4,321.1 808.3,306.5 809.9,313.7 811.5,302.1 812.9,309.9 814.5,295.3 816.4,302.8 818.0,301.7 819.9,292.4 821.8,289.3 823.6,295.4 825.2,280.7 826.8,292.6 827.9,285.4 829.6,271.3 831.1,288.4 832.6,270.2 833.9,281.1 835.3,263.6 836.8,274.9 838.5,264.8 839.9,256.9 841.1,255.3 842.1,268.8 844.1,268.7 845.7,251.4 847.4,263.1 849.0,247.9 850.7,257.1 852.3,253.6 853.7,252.7 855.1,234.5 856.2,250.8 858.4,231.3 859.7,244.0 860.9,226.9 863.1,234.3 865.1,221.3 866.5,234.3 867.7,217.9 869.5,231.7 871.0,216.7 872.0,221.6 874.1,209.0 875.0,219.1 876.5,208.0 878.6,213.7 880.0,200.8 882.2,208.9 883.2,193.9 885.3,204.3 887.5,186.5 889.0,198.3 891.1,182.2 892.2,192.7 893.6,190.2 895.0,182.0 897.0,185.8 898.4,177.5 899.8,182.8 901.1,172.6 903.1,176.7 905.0,161.7 907.2,171.1 908.3,160.5 910.0,158.4 911.2,164.6 912.9,151.0 914.7,160.7 915.8,147.4 917.6,156.3 919.2,146.8 920.4,151.9 921.9,138.4 924.0,138.5 925.8,144.2 927.6,132.4 929.0,138.8 931.1,123.5 932.1,134.0 933.6,124.2 934.8,132.5 936.1,117.8 937.0,131.2 938.0,113.5 939.3,127.0 941.4,113.3 942.9,123.4 944.0,105.7 945.8,99.8 947.4,115.0 949.0,101.6 950.0,113.2 951.7,92.4 952.9,104.9 954.2,94.4 956.0,98.9 957.5,87.5 959.6,95.5 961.6,79.9 963.4,89.9 965.4,77.3 966.7,82.8 968.5,73.9 970.1,77.5 971.1,72.4 972.9,77.9 974.5,72.4 975.5,75.0 977.6,72.4 978.8,72.4 980.1,72.4 982.3,72.4 984.2,72.4 985.6,72.4 987.6,72.4 989.3,72.4 991.5,72.4 992.9,72.4 994.0,72.4 995.0,72.4 996.0,72.4 997.5,72.4 999.0,72.4 1001.0,72.4 1002.5,72.4 1003.6,72.4 1005.7,72.4 1007.5,72.4 1009.2,72.4 1010.8,72.4 1012.9,72.4 1014.4,72.4 1016.1,72.4 1017.6,72.4" fill="none" stroke="#14d4d8" stroke-width="1.25" stroke-linejoin="round" clip-path="url(#pclip)"/><polyline points="6.0,562.6 7.6,562.6 9.5,562.6 11.0,562.6 12.1,562.6 13.9,562.6 15.5,562.6 16.9,562.6 18.9,562.6 21.0,562.6 22.1,562.6 23.4,562.3 25.0,562.6 27.0,549.3 28.1,562.6 29.7,562.6 31.3,555.7 33.4,546.4 34.4,562.6 35.4,558.2 36.7,537.2 38.8,553.7 39.7,540.2 40.8,554.6 42.9,535.1 44.4,551.3 46.0,526.9 47.8,543.2 49.3,536.7 50.9,522.4 51.9,537.9 53.2,515.7 54.2,540.6 55.6,515.5 56.9,532.3 58.3,516.1 60.0,523.8 61.2,507.8 62.3,520.5 63.7,505.8 65.4,519.7 66.4,500.9 68.3,511.8 70.0,493.8 71.2,508.7 72.6,489.1 73.7,485.8 75.8,482.4 77.0,479.5 78.5,496.8 79.5,481.0 80.4,499.4 82.4,496.5 84.2,473.3 85.7,491.6 87.0,465.8 88.9,479.5 90.8,462.4 92.6,465.2 94.6,471.3 96.1,455.7 97.0,466.0 98.0,448.4 99.5,465.0 101.2,447.8 102.5,461.6 103.8,447.0 105.4,456.6 107.1,439.3 108.8,453.9 110.0,431.9 111.4,451.6 112.8,451.4 114.2,425.0 116.2,444.5 117.8,421.8 118.8,433.1 119.9,420.7 121.8,436.4 123.7,410.1 124.6,431.9 125.7,402.2 126.9,431.7 128.1,404.5 129.4,421.3 130.8,403.5 132.2,403.3 134.0,416.2 135.7,397.3 137.5,413.5 139.3,390.9 140.9,402.5 142.9,383.0 144.8,396.9 145.8,380.7 147.1,397.0 149.2,374.2 151.1,391.3 152.9,368.0 154.9,382.2 156.7,356.9 157.9,363.7 159.6,382.4 161.5,356.3 162.5,373.5 163.9,351.6 165.2,368.0 166.8,347.8 167.8,366.3 169.8,347.2 171.1,336.3 172.8,362.8 174.6,330.6 175.7,353.4 177.4,334.3 179.1,351.3 180.1,330.9 181.9,346.0 183.3,326.2 185.1,340.7 186.4,319.5 187.4,319.5 188.7,332.1 190.5,310.9 191.7,324.0 193.5,312.4 195.3,324.8 196.4,307.0 198.0,316.1 198.9,296.6 200.3,296.7 202.3,311.7 203.8,314.1 205.6,288.4 207.1,305.9 208.6,285.3 210.6,297.5 212.3,281.3 213.3,299.9 215.2,278.8 216.8,268.2 218.2,296.9 219.6,289.9 220.5,270.1 222.0,285.0 223.7,262.8 225.1,280.3 226.4,259.6 227.6,270.7 228.7,259.2 229.8,267.6 230.8,254.5 231.7,266.4 232.7,251.5 234.8,259.3 235.8,246.6 236.8,259.2 238.3,241.3 239.5,261.3 240.5,229.7 241.4,249.9 242.3,235.4 243.5,232.5 245.5,243.2 247.1,230.9 249.0,242.6 250.8,224.2 252.5,241.3 253.9,234.0 255.3,218.3 257.0,230.9 258.1,216.4 259.9,222.9 261.8,199.6 263.2,197.6 264.6,219.0 265.6,214.2 267.3,202.4 268.9,207.2 271.0,192.2 272.8,209.2 274.0,192.2 275.0,203.2 277.0,186.3 278.9,197.0 280.8,178.2 281.9,194.5 283.0,173.8 284.0,189.9 285.6,169.9 287.2,183.8 288.5,179.0 289.6,160.3 291.7,155.1 293.1,184.2 294.5,176.4 296.6,177.1 297.6,152.5 299.2,169.0 300.7,146.3 301.9,160.2 302.9,145.4 305.0,162.0 306.1,140.1 307.6,156.4 309.1,130.9 310.3,145.3 311.8,133.2 312.9,148.7 314.8,139.5 315.7,124.5 317.2,138.8 319.1,122.0 320.5,137.5 322.4,128.8 324.2,109.7 325.5,122.4 327.5,106.7 329.5,125.0 331.0,104.9 333.1,116.1 334.5,95.6 335.6,94.3 337.5,115.9 338.5,88.5 339.7,112.9 341.4,85.1 343.5,85.4 344.6,78.0 345.8,104.5 347.2,81.0 349.3,89.3 350.3,72.4 351.9,82.6 354.0,72.4 355.2,78.5 357.2,72.4 359.3,78.1 360.3,72.4 362.2,72.4 363.7,72.4 365.8,72.4 366.9,72.4 368.0,72.4 369.2,72.4 370.9,72.4 372.7,72.4 374.3,72.4 375.4,72.4 376.5,72.4 377.7,72.4 379.1,72.4 381.1,72.4 382.6,72.4 384.0,72.4 385.5,72.4 387.2,72.4 389.1,72.4 390.1,72.4 391.8,72.4 393.3,72.4 394.8,72.4 396.2,72.4 398.1,72.4 399.3,72.4 401.2,72.4 402.7,72.4 404.7,72.4 406.0,72.4 407.3,72.4 409.3,72.4 411.2,72.4 412.3,72.4 414.2,72.4 415.9,72.4 416.8,72.4 418.1,72.4 419.8,72.4 421.6,72.4 423.6,72.4 425.1,72.4 426.5,72.4 427.8,72.4 429.9,72.4 431.0,72.4 432.3,72.4 433.4,72.4 435.0,72.4 436.9,72.4 437.9,72.4 439.9,72.4 440.9,72.4 442.0,72.4 443.9,72.4 445.3,72.4 447.0,72.4 448.5,72.4 449.6,72.4 451.4,72.4 453.1,72.4 455.0,72.4 457.0,72.4 459.1,72.4 460.2,72.4 461.8,72.4 463.3,72.4 464.8,72.4 465.8,72.4 467.7,72.4 469.7,72.4 471.4,72.4 472.9,72.4 474.3,72.4 476.1,72.4 477.5,72.4 478.9,72.4 480.0,72.4 481.5,72.4 482.8,72.4 484.2,72.4 485.4,72.4 486.5,72.4 488.5,72.4 489.7,72.4 491.5,72.4 493.0,72.4 494.5,72.4 495.7,72.4 496.7,72.4 498.5,72.4 500.3,72.4 502.1,72.4 504.1,72.4 505.2,72.4 506.3,72.4 507.4,72.4 508.7,72.4 510.0,72.4 511.7,72.4 513.0,72.4 514.4,72.4 515.6,72.4 517.0,72.4 518.2,72.4 519.5,72.4 520.6,72.4 522.2,72.4 523.7,72.4 525.2,72.4 526.8,72.4 527.9,72.4 529.4,72.4 530.8,72.4 532.6,72.4 534.3,72.4 535.5,72.4 537.6,72.4 538.6,72.4 540.1,72.4 541.6,72.4 543.3,72.4 544.9,72.4 545.8,72.4 547.3,72.4 549.1,72.4 550.4,72.4 552.0,72.4 553.1,72.4 554.7,72.4 556.5,72.4 557.7,72.4 559.4,72.4 561.2,72.4 562.6,72.4 564.3,72.4 566.2,72.4 568.0,72.4 570.1,72.4 571.5,72.4 572.9,72.4 574.1,72.4 575.5,72.4 577.4,72.4 578.6,72.4 579.8,72.4 581.3,72.4 583.1,72.4 584.2,72.4 586.2,72.4 587.2,72.4 589.2,72.4 590.9,72.4 592.2,72.4 593.3,72.4 594.6,72.4 595.9,72.4 597.1,72.4 599.0,72.4 600.9,72.4 602.8,72.4 603.7,72.4 605.1,72.4 607.2,72.4 609.1,72.4 611.0,72.4 611.9,72.4 613.4,72.4 615.1,72.4 617.1,72.4 618.3,72.4 620.1,72.4 621.2,72.4 623.0,72.4 624.6,72.4 625.6,72.4 627.3,72.4 629.3,72.4 631.3,72.4 633.0,72.4 634.8,72.4 636.6,72.4 638.0,72.4 639.6,72.4 641.1,72.4 642.6,72.4 643.7,72.4 644.7,72.4 645.8,72.4 647.4,72.4 649.5,72.4 651.2,72.4 652.6,72.4 653.9,72.4 655.4,72.4 656.4,72.4 657.7,72.4 658.7,72.4 660.4,72.4 661.6,72.4 662.8,72.4 663.9,72.4 665.9,72.4 667.5,72.4 668.6,72.4 670.4,72.4 672.1,72.4 673.4,72.4 675.2,72.4 676.7,72.4 678.1,72.4 679.0,72.4 680.6,72.4 682.2,72.4 684.0,72.4 685.4,72.4 687.2,72.4 688.5,72.4 690.1,72.4 691.3,72.4 692.5,72.4 694.2,72.4 695.6,72.4 697.4,72.4 699.4,72.4 700.3,72.4 701.6,72.4 702.8,72.4 704.6,72.4 706.6,72.4 708.4,72.4 709.4,72.4 710.7,72.4 712.1,72.4 713.3,72.4 715.2,72.4 717.1,72.4 718.5,72.4 719.6,72.4 720.7,72.4 722.2,72.4 724.0,72.4 725.8,72.4 726.9,72.4 728.9,72.4 730.5,72.4 732.5,72.4 733.5,72.4 734.5,72.4 736.4,72.4 738.0,72.4 739.2,72.4 740.8,72.4 742.7,72.4 744.6,72.4 746.2,72.4 748.0,72.4 750.1,72.4 752.1,72.4 754.0,72.4 755.0,72.4 756.2,72.4 758.3,72.4 760.0,72.4 761.6,72.4 763.2,72.4 764.4,72.4 766.5,72.4 768.5,72.4 769.6,72.4 771.3,72.4 772.4,72.4 773.3,72.4 775.0,72.4 776.6,72.4 777.9,72.4 779.8,72.4 781.0,72.4 782.9,72.4 784.0,72.4 785.2,72.4 787.1,72.4 788.0,72.4 789.4,72.4 790.3,72.4 791.4,72.4 793.1,72.4 795.0,72.4 796.6,72.4 798.4,72.4 799.4,72.4 801.3,72.4 802.2,72.4 804.1,72.4 806.0,72.4 807.9,72.4 809.4,72.4 810.9,72.4 812.8,72.4 814.2,72.4 815.6,72.4 817.5,72.4 819.1,72.4 821.0,72.4 822.9,72.4 824.8,72.4 825.9,72.4 827.7,72.4 828.7,72.4 830.1,72.4 831.9,72.4 833.9,72.4 835.5,72.4 836.6,72.4 838.7,72.4 839.7,72.4 841.7,72.4 843.2,72.4 844.5,72.4 845.8,72.4 847.7,72.4 848.8,72.4 850.7,72.4 851.7,72.4 853.2,72.4 854.7,72.4 855.6,72.4 856.9,72.4 858.2,72.4 859.3,72.4 861.4,72.4 862.7,72.4 863.8,72.4 865.3,72.4 866.2,72.4 868.2,72.4 869.7,72.4 871.3,72.4 872.5,72.4 873.7,72.4 875.8,72.4 876.9,72.4 878.4,72.4 879.8,72.4 881.4,72.4 882.6,72.4 883.7,72.4 885.0,72.4 886.6,72.4 888.7,72.4 890.0,72.4 891.9,72.4 893.6,72.4 894.8,72.4 896.2,72.4 897.7,72.4 898.8,72.4 899.9,72.4 900.9,72.4 902.7,72.4 904.2,72.4 905.2,72.4 906.7,72.4 908.6,72.4 910.2,72.4 911.8,72.4 913.0,72.4 914.1,72.4 915.9,72.4 917.2,72.4 918.2,72.4 919.2,72.4 921.0,72.4 922.4,72.4 924.2,72.4 925.6,72.4 926.9,72.4 927.9,72.4 929.9,72.4 931.9,72.4 932.8,72.4 934.2,72.4 935.4,72.4 936.8,72.4 938.7,72.4 940.6,72.4 941.6,72.4 943.1,72.4 945.2,72.4 946.9,72.4 948.9,72.4 950.8,72.4 951.9,72.4 952.9,72.4 954.7,72.4 956.0,72.4 957.7,72.4 959.5,72.4 960.7,72.4 961.7,72.4 963.6,72.4 965.6,72.4 967.5,72.4 969.4,72.4 970.5,72.4 972.2,72.4 973.9,72.4 975.4,72.4 976.5,72.4 978.4,72.4 980.3,72.4 981.9,72.4 983.2,72.4 985.1,72.4 986.6,72.4 988.2,72.4 989.2,72.4 990.3,72.4 991.7,72.4 993.2,72.4 994.2,72.4 995.5,72.4 996.6,72.4 998.4,72.4 999.6,72.4 1000.8,72.4 1002.3,72.4 1003.8,72.4 1005.1,72.4 1006.3,72.4 1007.3,72.4 1008.7,72.4 1010.5,72.4 1011.6,72.4 1012.5,72.4 1014.4,72.4 1016.2,72.4 1018.2,72.4" fill="none" stroke="#e4e000" stroke-width="1.3" stroke-linejoin="round" clip-path="url(#pclip)"/><rect x="6" y="72" width="1012" height="1" fill="#3a3a50" opacity="0.4"/><rect x="6" y="562" width="1012" height="1" fill="#3a3a3a" opacity="0.4"/><text transform="translate(87.54,555.30) scale(0.930,1)" font-family="Liberation Sans" font-weight="normal" font-style="normal" font-size="13.90" fill="#f08c0a" stroke="#f08c0a" stroke-width="0.59" stroke-linejoin="round">-360ns</text><text transform="translate(190.99,555.30) scale(0.930,1)" font-family="Liberation Sans" font-weight="normal" font-style="normal" font-size="13.90" fill="#f08c0a" stroke="#f08c0a" stroke-width="0.59" stroke-linejoin="round">140ns</text><text transform="translate(292.29,555.30) scale(0.930,1)" font-family="Liberation Sans" font-weight="normal" font-style="normal" font-size="13.90" fill="#f08c0a" stroke="#f08c0a" stroke-width="0.59" stroke-linejoin="round">640ns</text><text transform="translate(391.67,555.30) scale(0.930,1)" font-family="Liberation Sans" font-weight="normal" font-style="normal" font-size="13.90" fill="#f08c0a" stroke="#f08c0a" stroke-width="0.59" stroke-linejoin="round">1.14μs</text><text transform="translate(492.97,555.30) scale(0.930,1)" font-family="Liberation Sans" font-weight="normal" font-style="normal" font-size="13.90" fill="#f08c0a" stroke="#f08c0a" stroke-width="0.59" stroke-linejoin="round">1.64μs</text><text transform="translate(594.27,555.30) scale(0.930,1)" font-family="Liberation Sans" font-weight="normal" font-style="normal" font-size="13.90" fill="#f08c0a" stroke="#f08c0a" stroke-width="0.59" stroke-linejoin="round">2.14μs</text><text transform="translate(695.57,555.30) scale(0.930,1)" font-family="Liberation Sans" font-weight="normal" font-style="normal" font-size="13.90" fill="#f08c0a" stroke="#f08c0a" stroke-width="0.59" stroke-linejoin="round">2.64μs</text><text transform="translate(796.87,555.30) scale(0.930,1)" font-family="Liberation Sans" font-weight="normal" font-style="normal" font-size="13.90" fill="#f08c0a" stroke="#f08c0a" stroke-width="0.59" stroke-linejoin="round">3.14μs</text><text transform="translate(898.17,555.30) scale(0.930,1)" font-family="Liberation Sans" font-weight="normal" font-style="normal" font-size="13.90" fill="#f08c0a" stroke="#f08c0a" stroke-width="0.59" stroke-linejoin="round">3.64μs</text><text transform="translate(959.95,139.05) scale(0.970,1)" font-family="Liberation Sans" font-weight="normal" font-style="normal" font-size="12.89" fill="#f0f000" stroke="#f0f000" stroke-width="0.57" stroke-linejoin="round">6.054mV</text><text transform="translate(959.95,200.50) scale(0.970,1)" font-family="Liberation Sans" font-weight="normal" font-style="normal" font-size="12.89" fill="#f0f000" stroke="#f0f000" stroke-width="0.57" stroke-linejoin="round">4.054mV</text><text transform="translate(959.95,261.95) scale(0.970,1)" font-family="Liberation Sans" font-weight="normal" font-style="normal" font-size="12.89" fill="#f0f000" stroke="#f0f000" stroke-width="0.57" stroke-linejoin="round">2.054mV</text><text transform="translate(956.19,323.40) scale(0.970,1)" font-family="Liberation Sans" font-weight="normal" font-style="normal" font-size="12.89" fill="#f0f000" stroke="#f0f000" stroke-width="0.57" stroke-linejoin="round">53.662μV</text><text transform="translate(955.78,384.85) scale(0.970,1)" font-family="Liberation Sans" font-weight="normal" font-style="normal" font-size="12.89" fill="#f0f000" stroke="#f0f000" stroke-width="0.57" stroke-linejoin="round">-1.946mV</text><text transform="translate(955.78,446.30) scale(0.970,1)" font-family="Liberation Sans" font-weight="normal" font-style="normal" font-size="12.89" fill="#f0f000" stroke="#f0f000" stroke-width="0.57" stroke-linejoin="round">-3.946mV</text><text transform="translate(955.78,507.75) scale(0.970,1)" font-family="Liberation Sans" font-weight="normal" font-style="normal" font-size="12.89" fill="#f0f000" stroke="#f0f000" stroke-width="0.57" stroke-linejoin="round">-5.946mV</text><text transform="translate(6.20,35.90) scale(0.883,1)" font-family="Liberation Serif" font-weight="bold" font-style="normal" font-size="34.05" fill="#f2e600" stroke="#f2e600" stroke-width="1.47" stroke-linejoin="round">RIGOL</text><text transform="translate(115.90,32.20) scale(0.855,1)" font-family="Liberation Sans" font-weight="normal" font-style="normal" font-size="21.22" fill="#ff1010" stroke="#ff1010" stroke-width="0.29" stroke-linejoin="round">STOP</text><text transform="translate(184.39,31.60) scale(0.920,1)" font-family="Liberation Sans" font-weight="normal" font-style="normal" font-size="19.91" fill="#ff8c00" stroke="#ff8c00" stroke-width="0.76" stroke-linejoin="round">H</text><text transform="translate(294.39,31.60) scale(0.920,1)" font-family="Liberation Sans" font-weight="normal" font-style="normal" font-size="19.91" fill="#ff8c00" stroke="#ff8c00" stroke-width="0.76" stroke-linejoin="round">A</text><text transform="translate(453.89,31.60) scale(0.920,1)" font-family="Liberation Sans" font-weight="normal" font-style="normal" font-size="19.91" fill="#ff8c00" stroke="#ff8c00" stroke-width="0.76" stroke-linejoin="round">D</text><text transform="translate(578.40,31.60) scale(0.920,1)" font-family="Liberation Sans" font-weight="normal" font-style="normal" font-size="19.91" fill="#ff8c00" stroke="#ff8c00" stroke-width="0.76" stroke-linejoin="round">T</text><text transform="translate(215.80,28.20) scale(0.974,1)" font-family="Liberation Sans" font-weight="normal" font-style="normal" font-size="13.37" fill="#e6e8e8" stroke="#e6e8e8" stroke-width="0.26" stroke-linejoin="round">500.00ns/</text><text transform="translate(324.70,22.30) scale(1.010,1)" font-family="Liberation Sans" font-weight="normal" font-style="normal" font-size="13.08" fill="#e6e8e8" stroke="#e6e8e8" stroke-width="0.25" stroke-linejoin="round">500MSa/s</text><text transform="translate(397.30,22.30) scale(1.014,1)" font-family="Liberation Sans" font-weight="normal" font-style="normal" font-size="11.31" fill="#e6e8e8" stroke="#e6e8e8" stroke-width="0.25" stroke-linejoin="round">10kpts</text><text transform="translate(354.90,35.50) scale(0.977,1)" font-family="Liberation Sans" font-weight="normal" font-style="normal" font-size="10.17" fill="#e6e8e8" stroke="#e6e8e8" stroke-width="0.26" stroke-linejoin="round">Norm</text><text transform="translate(397.90,37.90) scale(1.106,1)" font-family="Liberation Sans" font-weight="normal" font-style="normal" font-size="10.89" fill="#8a9498" stroke="#8a9498" stroke-width="0.23" stroke-linejoin="round">2ns/pt</text><text transform="translate(487.00,28.20) scale(0.933,1)" font-family="Liberation Sans" font-weight="normal" font-style="normal" font-size="13.37" fill="#e6e8e8" stroke="#e6e8e8" stroke-width="0.27" stroke-linejoin="round">1.64μs</text><text transform="translate(654.00,28.20) scale(0.878,1)" font-family="Liberation Sans" font-weight="normal" font-style="normal" font-size="13.18" fill="#e6e8e8" stroke="#e6e8e8" stroke-width="0.28" stroke-linejoin="round">268.31μV</text><text transform="translate(712.00,28.40) scale(0.933,1)" font-family="Liberation Sans" font-weight="normal" font-style="normal" font-size="13.66" fill="#8cc21e" stroke="#8cc21e" stroke-width="0.27" stroke-linejoin="round">A</text><polyline points="328.2,37.1 330,36.6 331.5,37.4 333,36.8 334.7,37.1 334.7,26.4 336.5,26.9 338,26.2 339.5,26.8 341,26.2 343.6,26.4 343.6,37.1 345.5,36.6 347,37.4 348.5,36.8 350.3,37.1" fill="none" stroke="#d8dcdc" stroke-width="1.1"/><rect x="608.8" y="16.6" width="16.2" height="16.4" rx="3.2" fill="#fcf800"/><path d="M617.6,21.5 L617.6,30 M617.6,21.8 L614.4,24.3" stroke="#111" stroke-width="1.5" fill="none"/><line x1="627.5" y1="24.4" x2="647.8" y2="24.4" stroke="#1f8a6c" stroke-width="1"/><polyline points="627.5,34.6 632,34.6 642.5,14.6 648,14.6" fill="none" stroke="#e8e8e8" stroke-width="1.3"/><polyline points="741.6,18.2 734.2,24.4 741.6,30.8" fill="none" stroke="#8e9294" stroke-width="1.6"/><polyline points="1008.5,21 1015.2,26 1008.5,31" fill="none" stroke="#e8e8e8" stroke-width="1.3"/><text transform="translate(756.40,21.70) scale(1.000,1)" font-family="Liberation Sans" font-weight="bold" font-style="normal" font-size="14.53" fill="#ff1010">STOP</text><line x1="750" y1="25.3" x2="801.5" y2="25.3" stroke="#c8262a" stroke-width="1.3"/><text transform="translate(760.50,38.80) scale(1.029,1)" font-family="Liberation Sans" font-weight="bold" font-style="normal" font-size="13.81" fill="#ff1010">RUN</text><defs><linearGradient id="slv" x1="0" y1="0" x2="0" y2="1"><stop offset="0" stop-color="#f4f4f4"/><stop offset="1" stop-color="#a8a8a8"/></linearGradient><linearGradient id="gearg" x1="0" y1="0" x2="1" y2="1"><stop offset="0" stop-color="#e8e8e8"/><stop offset="0.5" stop-color="#9a9a9a"/><stop offset="1" stop-color="#d0d0d0"/></linearGradient><radialGradient id="gearin" cx="0.5" cy="0.5" r="0.5"><stop offset="0" stop-color="#4a4442"/><stop offset="1" stop-color="#2a2624"/></radialGradient><linearGradient id="rulg" x1="0" y1="0" x2="0" y2="1"><stop offset="0" stop-color="#f0f0f0"/><stop offset="1" stop-color="#555"/></linearGradient></defs><text transform="translate(823.80,31.50) scale(0.845,1)" font-family="Liberation Sans" font-weight="bold" font-style="normal" font-size="19.19" fill="url(#slv)">D</text><text transform="translate(836.00,31.20) scale(1.004,1)" font-family="Liberation Sans" font-weight="bold" font-style="normal" font-size="10.76" fill="url(#slv)">efault</text><defs><linearGradient id="rulg2" x1="0" y1="0" x2="0" y2="1"><stop offset="0" stop-color="#8c9294"/><stop offset="0.85" stop-color="#3a4246"/><stop offset="1" stop-color="#262d30"/></linearGradient></defs><rect x="898.8" y="12.9" width="27.4" height="11.2" fill="url(#rulg2)" stroke="#d4d8d8" stroke-width="1.3"/><line x1="902.7" y1="13.5" x2="902.7" y2="19.9" stroke="#d4d8d8" stroke-width="1.5"/><line x1="906" y1="13.5" x2="906" y2="17.2" stroke="#d4d8d8" stroke-width="1.5"/><line x1="909.3" y1="13.5" x2="909.3" y2="19.9" stroke="#d4d8d8" stroke-width="1.5"/><line x1="912.5" y1="13.5" x2="912.5" y2="17.2" stroke="#d4d8d8" stroke-width="1.5"/><line x1="915.5" y1="13.5" x2="915.5" y2="19.9" stroke="#d4d8d8" stroke-width="1.5"/><line x1="918.7" y1="13.5" x2="918.7" y2="17.2" stroke="#d4d8d8" stroke-width="1.5"/><line x1="921.6" y1="13.5" x2="921.6" y2="19.9" stroke="#d4d8d8" stroke-width="1.5"/><text transform="translate(893.80,37.60) scale(0.952,1)" font-family="Liberation Sans" font-weight="normal" font-style="normal" font-size="9.88" fill="#c8cccc" stroke="#c8cccc" stroke-width="0.26" stroke-linejoin="round">Measure</text><defs><linearGradient id="knobg" x1="0" y1="0" x2="1" y2="0.3"><stop offset="0" stop-color="#2c3438"/><stop offset="0.75" stop-color="#9aa2a4"/><stop offset="1" stop-color="#707a7e"/></linearGradient></defs><path d="M966.8,10.2 L986.8,10.2 L989.5,25.8 L963.6,25.8 Z" fill="url(#knobg)" stroke="#e4e6e6" stroke-width="1.1" stroke-linejoin="round"/><path d="M969.4,10.8 Q968.6,18 966.4,21.8 M974.2,10.8 L974.6,18 Q976.6,21.6 978.6,18 L979,10.8 M983.8,10.8 L985,16" fill="none" stroke="#d8dcdc" stroke-width="1"/><circle cx="990.2" cy="20.6" r="7" fill="#f2f2f2"/><circle cx="990.2" cy="20.6" r="4.2" fill="none" stroke="#555d60" stroke-width="1.1"/><circle cx="990.2" cy="20.6" r="3.1" fill="#fff"/><circle cx="995.47" cy="22.78" r="0.75" fill="#7a8286"/><circle cx="992.38" cy="25.87" r="0.75" fill="#7a8286"/><circle cx="988.02" cy="25.87" r="0.75" fill="#7a8286"/><circle cx="984.93" cy="22.78" r="0.75" fill="#7a8286"/><circle cx="984.93" cy="18.42" r="0.75" fill="#7a8286"/><circle cx="988.02" cy="15.33" r="0.75" fill="#7a8286"/><circle cx="992.38" cy="15.33" r="0.75" fill="#7a8286"/><circle cx="995.47" cy="18.42" r="0.75" fill="#7a8286"/><text transform="translate(958.70,37.60) scale(0.951,1)" font-family="Liberation Sans" font-weight="normal" font-style="normal" font-size="9.88" fill="#c8cccc" stroke="#c8cccc" stroke-width="0.26" stroke-linejoin="round">Flex Knob</text><text transform="translate(10.30,66.90) scale(0.992,1)" font-family="Liberation Sans" font-weight="normal" font-style="normal" font-size="14.39" fill="#d0d4d4" stroke="#d0d4d4" stroke-width="0.25" stroke-linejoin="round">Waveform View</text><rect x="991" y="56.8" width="15" height="2" fill="#c8c8c8"/><rect x="991" y="61.3" width="15" height="2" fill="#c8c8c8"/><rect x="991" y="65.6" width="15" height="2" fill="#c8c8c8"/><rect x="360" y="54" width="304" height="15.2" fill="#7a7a7a"/><rect x="499.5" y="54" width="75.7" height="15.2" fill="#212a2c"/><polyline points="362.0,67.99 363.0,67.15 364.0,65.97 365.0,64.52 366.0,62.89 367.0,61.18 368.0,59.50 369.0,57.96 370.0,56.64 371.0,55.64 372.0,55.01 373.0,54.80 374.0,55.01 375.0,55.64 376.0,56.64 377.0,57.96 378.0,59.50 379.0,61.18 380.0,62.89 381.0,64.52 382.0,65.97 383.0,67.15 384.0,67.99 385.0,68.44 386.0,68.46 387.0,68.05 388.0,67.25 389.0,66.10 390.0,64.67 391.0,63.05 392.0,61.35 393.0,59.66 394.0,58.10 395.0,56.76 396.0,55.72 397.0,55.06 398.0,54.80 399.0,54.97 400.0,55.56 401.0,56.53 402.0,57.81 403.0,59.34 404.0,61.01 405.0,62.72 406.0,64.36 407.0,65.83 408.0,67.05 409.0,67.92 410.0,68.41 411.0,68.47 412.0,68.11 413.0,67.35 414.0,66.23 415.0,64.82 416.0,63.22 417.0,61.52 418.0,59.83 419.0,58.25 420.0,56.88 421.0,55.81 422.0,55.11 423.0,54.81 424.0,54.94 425.0,55.48 426.0,56.41 427.0,57.67 428.0,59.18 429.0,60.84 430.0,62.55 431.0,64.20 432.0,65.70 433.0,66.94 434.0,67.85 435.0,68.38 436.0,68.49 437.0,68.17 438.0,67.44 439.0,66.36 440.0,64.98 441.0,63.39 442.0,61.69 443.0,59.99 444.0,58.40 445.0,57.01 446.0,55.90 447.0,55.16 448.0,54.82 449.0,54.90 450.0,55.41 451.0,56.31 452.0,57.53 453.0,59.02 454.0,60.67 455.0,62.38 456.0,64.04 457.0,65.56 458.0,66.83 459.0,67.78 460.0,68.35 461.0,68.50 462.0,68.22 463.0,67.53 464.0,66.48 465.0,65.12 466.0,63.55 467.0,61.86 468.0,60.16 469.0,58.55 470.0,57.13 471.0,56.00 472.0,55.22 473.0,54.83 474.0,54.88 475.0,55.34 476.0,56.20 477.0,57.40 478.0,58.86 479.0,60.50 480.0,62.21 481.0,63.88 482.0,65.42 483.0,66.72 484.0,67.70 485.0,68.31 486.0,68.50 487.0,68.26 488.0,67.62 489.0,66.60 490.0,65.27 491.0,63.72 492.0,62.04 493.0,60.33 494.0,58.71 495.0,57.27 496.0,56.10 497.0,55.28 498.0,54.85 499.0,54.85 500.0,55.28 501.0,56.10 502.0,57.27 503.0,58.71 504.0,60.33 505.0,62.04 506.0,63.72 507.0,65.27 508.0,66.60 509.0,67.62 510.0,68.26 511.0,68.50 512.0,68.31 513.0,67.70 514.0,66.72 515.0,65.42 516.0,63.88 517.0,62.21 518.0,60.50 519.0,58.86 520.0,57.40 521.0,56.20 522.0,55.34 523.0,54.88 524.0,54.83 525.0,55.22 526.0,56.00 527.0,57.13 528.0,58.55 529.0,60.16 530.0,61.86 531.0,63.55 532.0,65.12 533.0,66.48 534.0,67.53 535.0,68.22 536.0,68.50 537.0,68.35 538.0,67.78 539.0,66.83 540.0,65.56 541.0,64.04 542.0,62.38 543.0,60.67 544.0,59.02 545.0,57.53 546.0,56.31 547.0,55.41 548.0,54.90 549.0,54.82 550.0,55.16 551.0,55.90 552.0,57.01 553.0,58.40 554.0,59.99 555.0,61.69 556.0,63.39 557.0,64.98 558.0,66.36 559.0,67.44 560.0,68.17 561.0,68.49 562.0,68.38 563.0,67.85 564.0,66.94 565.0,65.70 566.0,64.20 567.0,62.55 568.0,60.84 569.0,59.18 570.0,57.67 571.0,56.41 572.0,55.48 573.0,54.94 574.0,54.81 575.0,55.11 576.0,55.81 577.0,56.88 578.0,58.25 579.0,59.83 580.0,61.52 581.0,63.22 582.0,64.82 583.0,66.23 584.0,67.35 585.0,68.11 586.0,68.47 587.0,68.41 588.0,67.92 589.0,67.05 590.0,65.83 591.0,64.36 592.0,62.72 593.0,61.01 594.0,59.34 595.0,57.81 596.0,56.53 597.0,55.56 598.0,54.97 599.0,54.80 600.0,55.06 601.0,55.72 602.0,56.76 603.0,58.10 604.0,59.66 605.0,61.35 606.0,63.05 607.0,64.67 608.0,66.10 609.0,67.25 610.0,68.05 611.0,68.46 612.0,68.44 613.0,67.99 614.0,67.15 615.0,65.97 616.0,64.52 617.0,62.89 618.0,61.18 619.0,59.50 620.0,57.96 621.0,56.64 622.0,55.64 623.0,55.01 624.0,54.80 625.0,55.01 626.0,55.64 627.0,56.64 628.0,57.96 629.0,59.50 630.0,61.18 631.0,62.89 632.0,64.52 633.0,65.97 634.0,67.15 635.0,67.99 636.0,68.44 637.0,68.46 638.0,68.05 639.0,67.25 640.0,66.10 641.0,64.67 642.0,63.05 643.0,61.35 644.0,59.66 645.0,58.10 646.0,56.76 647.0,55.72 648.0,55.06 649.0,54.80 650.0,54.97 651.0,55.56 652.0,56.53 653.0,57.81 654.0,59.34 655.0,61.01 656.0,62.72 657.0,64.36 658.0,65.83 659.0,67.05 660.0,67.92 661.0,68.41 662.0,68.47" fill="none" stroke="#9c9c9c" stroke-width="1.1"/><polygon points="504.3,53.9 520,53.9 512.2,62.1" fill="#ff9000"/><polygon points="504.5,73 520.5,73 512.5,81.5" fill="#000" stroke="#ff9000" stroke-width="1.2"/><polygon points="171,83 187.4,83 187.4,98 179.2,105.6 171,98" fill="#ff8800"/><text transform="translate(175.30,94.90) scale(0.938,1)" font-family="Liberation Sans" font-weight="normal" font-style="normal" font-size="13.08" fill="#1a1a1a" stroke="#1a1a1a" stroke-width="0.53" stroke-linejoin="round">T</text><polygon points="6,315.6 25.5,315.6 34,323 25.5,330.6 6,330.6" fill="#1898a0"/><polygon points="6,310.3 26.3,310.3 34.6,318.7 26.3,329.3 6,329.3" fill="#000"/><polygon points="6.2,312 25.3,312 32.4,318.7 25.3,326.6 6.2,326.6" fill="#f6f200"/><path d="M16.4,315.2 L16.4,323.8 M16.4,315.4 L13,317.9" stroke="#222" stroke-width="1.6" fill="none"/><polygon points="990.6,310.3 998,302.4 1018,302.4 1018,318 998,318" fill="#ff8000"/><text transform="translate(1004.30,314.90) scale(0.863,1)" font-family="Liberation Sans" font-weight="normal" font-style="normal" font-size="13.08" fill="#1a1a1a" stroke="#1a1a1a" stroke-width="0.58" stroke-linejoin="round">T</text><rect x="979.4" y="533.9" width="20" height="2.8" fill="#fff"/><rect x="979.4" y="541.85" width="15.3" height="2.8" fill="#fff"/><rect x="979.4" y="549.85" width="20" height="2.8" fill="#fff"/><polyline points="1006.5,536.8 999.8,543.25 1006.5,549.7" fill="none" stroke="#fff" stroke-width="2.8"/><defs><linearGradient id="gring" x1="0" y1="0" x2="0.3" y2="1"><stop offset="0" stop-color="#d8d8d8"/><stop offset="0.5" stop-color="#a8a8a8"/><stop offset="1" stop-color="#c8c8c8"/></linearGradient><linearGradient id="rlg" x1="0" y1="0" x2="1" y2="1"><stop offset="0" stop-color="#d0d0d0"/><stop offset="0.5" stop-color="#8a8a8a"/><stop offset="1" stop-color="#b8b8b8"/></linearGradient></defs><path d="M36.20,578.70 L36.61,578.69 L37.03,578.65 L37.44,578.58 L37.87,578.49 L38.29,578.36 L38.73,578.19 L39.19,577.98 L39.65,577.72 L40.15,577.38 L40.67,576.93 L41.27,576.24 L42.06,574.72 L42.54,574.82 L43.02,574.94 L43.50,575.06 L43.97,575.19 L44.44,575.33 L44.91,575.48 L45.38,575.64 L45.84,575.80 L46.31,575.97 L46.76,576.15 L47.22,576.34 L47.67,576.54 L48.12,576.74 L48.56,576.95 L49.00,577.17 L49.44,577.40 L49.87,577.64 L50.30,577.88 L50.72,578.13 L51.14,578.39 L51.56,578.65 L51.05,580.29 L50.98,581.19 L51.03,581.89 L51.14,582.48 L51.28,582.99 L51.46,583.46 L51.65,583.89 L51.86,584.28 L52.09,584.65 L52.34,584.99 L52.61,585.31 L52.89,585.61 L53.19,585.89 L53.51,586.16 L53.85,586.41 L54.22,586.64 L54.61,586.85 L55.04,587.04 L55.51,587.22 L56.02,587.36 L56.61,587.47 L57.31,587.52 L58.21,587.45 L59.85,586.94 L60.11,587.36 L60.37,587.78 L60.62,588.20 L60.86,588.63 L61.10,589.06 L61.33,589.50 L61.55,589.94 L61.76,590.38 L61.96,590.83 L62.16,591.28 L62.35,591.74 L62.53,592.19 L62.70,592.66 L62.86,593.12 L63.02,593.59 L63.17,594.06 L63.31,594.53 L63.44,595.00 L63.56,595.48 L63.68,595.96 L63.78,596.44 L62.26,597.23 L61.57,597.83 L61.12,598.35 L60.78,598.85 L60.52,599.31 L60.31,599.77 L60.14,600.21 L60.01,600.63 L59.92,601.06 L59.85,601.47 L59.81,601.89 L59.80,602.30 L59.81,602.71 L59.85,603.13 L59.92,603.54 L60.01,603.97 L60.14,604.39 L60.31,604.83 L60.52,605.29 L60.78,605.75 L61.12,606.25 L61.57,606.77 L62.26,607.37 L63.78,608.16 L63.68,608.64 L63.56,609.12 L63.44,609.60 L63.31,610.07 L63.17,610.54 L63.02,611.01 L62.86,611.48 L62.70,611.94 L62.53,612.41 L62.35,612.86 L62.16,613.32 L61.96,613.77 L61.76,614.22 L61.55,614.66 L61.33,615.10 L61.10,615.54 L60.86,615.97 L60.62,616.40 L60.37,616.82 L60.11,617.24 L59.85,617.66 L58.21,617.15 L57.31,617.08 L56.61,617.13 L56.02,617.24 L55.51,617.38 L55.04,617.56 L54.61,617.75 L54.22,617.96 L53.85,618.19 L53.51,618.44 L53.19,618.71 L52.89,618.99 L52.61,619.29 L52.34,619.61 L52.09,619.95 L51.86,620.32 L51.65,620.71 L51.46,621.14 L51.28,621.61 L51.14,622.12 L51.03,622.71 L50.98,623.41 L51.05,624.31 L51.56,625.95 L51.14,626.21 L50.72,626.47 L50.30,626.72 L49.87,626.96 L49.44,627.20 L49.00,627.43 L48.56,627.65 L48.12,627.86 L47.67,628.06 L47.22,628.26 L46.76,628.45 L46.31,628.63 L45.84,628.80 L45.38,628.96 L44.91,629.12 L44.44,629.27 L43.97,629.41 L43.50,629.54 L43.02,629.66 L42.54,629.78 L42.06,629.88 L41.27,628.36 L40.67,627.67 L40.15,627.22 L39.65,626.88 L39.19,626.62 L38.73,626.41 L38.29,626.24 L37.87,626.11 L37.44,626.02 L37.03,625.95 L36.61,625.91 L36.20,625.90 L35.79,625.91 L35.37,625.95 L34.96,626.02 L34.53,626.11 L34.11,626.24 L33.67,626.41 L33.21,626.62 L32.75,626.88 L32.25,627.22 L31.73,627.67 L31.13,628.36 L30.34,629.88 L29.86,629.78 L29.38,629.66 L28.90,629.54 L28.43,629.41 L27.96,629.27 L27.49,629.12 L27.02,628.96 L26.56,628.80 L26.09,628.63 L25.64,628.45 L25.18,628.26 L24.73,628.06 L24.28,627.86 L23.84,627.65 L23.40,627.43 L22.96,627.20 L22.53,626.96 L22.10,626.72 L21.68,626.47 L21.26,626.21 L20.84,625.95 L21.35,624.31 L21.42,623.41 L21.37,622.71 L21.26,622.12 L21.12,621.61 L20.94,621.14 L20.75,620.71 L20.54,620.32 L20.31,619.95 L20.06,619.61 L19.79,619.29 L19.51,618.99 L19.21,618.71 L18.89,618.44 L18.55,618.19 L18.18,617.96 L17.79,617.75 L17.36,617.56 L16.89,617.38 L16.38,617.24 L15.79,617.13 L15.09,617.08 L14.19,617.15 L12.55,617.66 L12.29,617.24 L12.03,616.82 L11.78,616.40 L11.54,615.97 L11.30,615.54 L11.07,615.10 L10.85,614.66 L10.64,614.22 L10.44,613.77 L10.24,613.32 L10.05,612.86 L9.87,612.41 L9.70,611.94 L9.54,611.48 L9.38,611.01 L9.23,610.54 L9.09,610.07 L8.96,609.60 L8.84,609.12 L8.72,608.64 L8.62,608.16 L10.14,607.37 L10.83,606.77 L11.28,606.25 L11.62,605.75 L11.88,605.29 L12.09,604.83 L12.26,604.39 L12.39,603.97 L12.48,603.54 L12.55,603.13 L12.59,602.71 L12.60,602.30 L12.59,601.89 L12.55,601.47 L12.48,601.06 L12.39,600.63 L12.26,600.21 L12.09,599.77 L11.88,599.31 L11.62,598.85 L11.28,598.35 L10.83,597.83 L10.14,597.23 L8.62,596.44 L8.72,595.96 L8.84,595.48 L8.96,595.00 L9.09,594.53 L9.23,594.06 L9.38,593.59 L9.54,593.12 L9.70,592.66 L9.87,592.19 L10.05,591.74 L10.24,591.28 L10.44,590.83 L10.64,590.38 L10.85,589.94 L11.07,589.50 L11.30,589.06 L11.54,588.63 L11.78,588.20 L12.03,587.78 L12.29,587.36 L12.55,586.94 L14.19,587.45 L15.09,587.52 L15.79,587.47 L16.38,587.36 L16.89,587.22 L17.36,587.04 L17.79,586.85 L18.18,586.64 L18.55,586.41 L18.89,586.16 L19.21,585.89 L19.51,585.61 L19.79,585.31 L20.06,584.99 L20.31,584.65 L20.54,584.28 L20.75,583.89 L20.94,583.46 L21.12,582.99 L21.26,582.48 L21.37,581.89 L21.42,581.19 L21.35,580.29 L20.84,578.65 L21.26,578.39 L21.68,578.13 L22.10,577.88 L22.53,577.64 L22.96,577.40 L23.40,577.17 L23.84,576.95 L24.28,576.74 L24.73,576.54 L25.18,576.34 L25.64,576.15 L26.09,575.97 L26.56,575.80 L27.02,575.64 L27.49,575.48 L27.96,575.33 L28.43,575.19 L28.90,575.06 L29.38,574.94 L29.86,574.82 L30.34,574.72 L31.13,576.24 L31.73,576.93 L32.25,577.38 L32.75,577.72 L33.21,577.98 L33.67,578.19 L34.11,578.36 L34.53,578.49 L34.96,578.58 L35.37,578.65 L35.79,578.69 L36.20,578.70Z" fill="url(#gring)"/><circle cx="36.2" cy="602.3" r="22.5" fill="url(#gearin)"/><path d="M24.5,591 L42.5,591 Q49.5,591.5 48.5,597.5 Q47.5,601.5 42,602.5 L49.5,613.5 L43,613.5 L36.5,603.5 L36.5,598.2 L41.8,598.2 Q43.8,597.8 43.5,596.2 Q43.2,595.2 41.5,595.2 L28.5,595.2 Z M26,598.5 L32.5,598.5 L32.5,613.5 L26,613.5 Z" fill="url(#rlg)"/><path d="M77,571.6 L130.3,571.6 Q133.3,571.6 133.3,574.6 L133.3,579 L195.3,579 Q198.3,579 198.3,582 L198.3,630 Q198.3,633.1 195.3,633.1 L77,633.1 Q74,633.1 74,630 L74,574.6 Q74,571.6 77,571.6 Z" fill="#f0ec00"/><path d="M76.5,573.6 L130.8,573.6 L130.8,586.7 L76.5,586.7 Z" fill="#0a0606"/><rect x="76.5" y="586.7" width="119.30000000000001" height="44.199999999999974" rx="3" fill="#4b575d"/><text transform="translate(83.80,584.60) scale(0.925,1)" font-family="Liberation Sans" font-weight="normal" font-style="normal" font-size="14.04" fill="#f0ec00" stroke="#f0ec00" stroke-width="0.27" stroke-linejoin="round">CH1</text><text transform="translate(82.70,605.40) scale(1.008,1)" font-family="Liberation Sans" font-weight="normal" font-style="normal" font-size="14.47" fill="#f0ec00" stroke="#f0ec00" stroke-width="0.25" stroke-linejoin="round">2.00mV/</text><text transform="translate(82.40,625.60) scale(0.963,1)" font-family="Liberation Sans" font-weight="normal" font-style="normal" font-size="11.92" fill="#e8eaea" stroke="#e8eaea" stroke-width="0.26" stroke-linejoin="round">-53.66μV</text><rect x="161.4" y="597.2" width="12.6" height="1.5" fill="#e8eaea"/><rect x="161.4" y="601" width="2" height="1.4" fill="#e8eaea"/><rect x="164.8" y="601" width="2" height="1.4" fill="#e8eaea"/><rect x="168.2" y="601" width="2" height="1.4" fill="#e8eaea"/><rect x="171.6" y="601" width="2" height="1.4" fill="#e8eaea"/><text transform="translate(178.60,605.90) scale(0.735,1)" font-family="Liberation Sans" font-weight="normal" font-style="normal" font-size="18.19" fill="#e8eaea" stroke="#e8eaea" stroke-width="0.34" stroke-linejoin="round">Ω</text><path d="M204.2,571.6 L257,571.6 Q260,571.6 260,574.6 L260,579 L322.6,579 Q325.6,579 325.6,582 L325.6,630 Q325.6,633.1 322.6,633.1 L204.2,633.1 Q201.2,633.1 201.2,630 L201.2,574.6 Q201.2,571.6 204.2,571.6 Z" fill="#4a5358"/><path d="M202.7,573 L258.5,573 L258.5,586.7 L202.7,586.7 Z" fill="#0a0606"/><rect x="202.7" y="586.7" width="121.40000000000003" height="44.89999999999998" rx="3" fill="#2e373c"/><text transform="translate(211.00,584.60) scale(0.925,1)" font-family="Liberation Sans" font-weight="normal" font-style="normal" font-size="14.04" fill="#10d8dc" stroke="#10d8dc" stroke-width="0.27" stroke-linejoin="round">CH2</text><text transform="translate(209.90,605.40) scale(1.008,1)" font-family="Liberation Sans" font-weight="normal" font-style="normal" font-size="14.47" fill="#10d8dc" stroke="#10d8dc" stroke-width="0.25" stroke-linejoin="round">2.00mV/</text><text transform="translate(209.60,625.60) scale(0.953,1)" font-family="Liberation Sans" font-weight="normal" font-style="normal" font-size="11.92" fill="#e8eaea" stroke="#e8eaea" stroke-width="0.26" stroke-linejoin="round">-153.02μV</text><rect x="288.6" y="597.2" width="12.6" height="1.5" fill="#e8eaea"/><rect x="288.6" y="601" width="2" height="1.4" fill="#e8eaea"/><rect x="292.0" y="601" width="2" height="1.4" fill="#e8eaea"/><rect x="295.4" y="601" width="2" height="1.4" fill="#e8eaea"/><rect x="298.8" y="601" width="2" height="1.4" fill="#e8eaea"/><path d="M331.2,571.6 L384,571.6 Q387,571.6 387,574.6 L387,579 L449.6,579 Q452.6,579 452.6,582 L452.6,630 Q452.6,633.1 449.6,633.1 L331.2,633.1 Q328.2,633.1 328.2,630 L328.2,574.6 Q328.2,571.6 331.2,571.6 Z" fill="#4a5358"/><path d="M329.7,573 L385.5,573 L385.5,586.7 L329.7,586.7 Z" fill="#0a0606"/><rect x="329.7" y="586.7" width="121.40000000000003" height="44.89999999999998" rx="3" fill="#2e373c"/><text transform="translate(338.00,584.60) scale(0.925,1)" font-family="Liberation Sans" font-weight="normal" font-style="normal" font-size="14.04" fill="#a0a8aa" stroke="#a0a8aa" stroke-width="0.27" stroke-linejoin="round">CH3</text><text transform="translate(336.90,605.40) scale(0.979,1)" font-family="Liberation Sans" font-weight="normal" font-style="normal" font-size="14.47" fill="#98a0a2" stroke="#98a0a2" stroke-width="0.26" stroke-linejoin="round">50.00mV/</text><text transform="translate(336.60,625.60) scale(0.939,1)" font-family="Liberation Sans" font-weight="normal" font-style="normal" font-size="11.92" fill="#98a0a2" stroke="#98a0a2" stroke-width="0.27" stroke-linejoin="round">0.00V</text><rect x="415.6" y="597.2" width="12.6" height="1.5" fill="#98a0a2"/><rect x="415.6" y="601" width="2" height="1.4" fill="#98a0a2"/><rect x="419.0" y="601" width="2" height="1.4" fill="#98a0a2"/><rect x="422.4" y="601" width="2" height="1.4" fill="#98a0a2"/><rect x="425.8" y="601" width="2" height="1.4" fill="#98a0a2"/><path d="M458.3,571.6 L511,571.6 Q514,571.6 514,574.6 L514,579 L576.8,579 Q579.8,579 579.8,582 L579.8,630 Q579.8,633.1 576.8,633.1 L458.3,633.1 Q455.3,633.1 455.3,630 L455.3,574.6 Q455.3,571.6 458.3,571.6 Z" fill="#4a5358"/><path d="M456.8,573 L512.5,573 L512.5,586.7 L456.8,586.7 Z" fill="#0a0606"/><rect x="456.8" y="586.7" width="121.49999999999994" height="44.89999999999998" rx="3" fill="#2e373c"/><text transform="translate(465.10,584.60) scale(0.925,1)" font-family="Liberation Sans" font-weight="normal" font-style="normal" font-size="14.04" fill="#a0a8aa" stroke="#a0a8aa" stroke-width="0.27" stroke-linejoin="round">CH4</text><text transform="translate(464.00,605.40) scale(0.979,1)" font-family="Liberation Sans" font-weight="normal" font-style="normal" font-size="14.47" fill="#98a0a2" stroke="#98a0a2" stroke-width="0.26" stroke-linejoin="round">50.00mV/</text><text transform="translate(463.70,625.60) scale(0.939,1)" font-family="Liberation Sans" font-weight="normal" font-style="normal" font-size="11.92" fill="#98a0a2" stroke="#98a0a2" stroke-width="0.27" stroke-linejoin="round">0.00V</text><rect x="542.7" y="597.2" width="12.6" height="1.5" fill="#98a0a2"/><rect x="542.7" y="601" width="2" height="1.4" fill="#98a0a2"/><rect x="546.1" y="601" width="2" height="1.4" fill="#98a0a2"/><rect x="549.5" y="601" width="2" height="1.4" fill="#98a0a2"/><rect x="552.9" y="601" width="2" height="1.4" fill="#98a0a2"/><path d="M589.25,578.75 L616.75,578.75 L616.75,574.25 Q616.75,571.25 619.75,571.25 L658.6,571.25 Q661.6,571.25 661.6,574.25 L661.6,630.4 Q661.6,633.4 658.6,633.4 L589.25,633.4 Q586.25,633.4 586.25,630.4 L586.25,581.75 Q586.25,578.75 589.25,578.75 Z" fill="#4a5358"/><rect x="618.25" y="572.8" width="41.85000000000002" height="13.9" fill="#000"/><rect x="587.75" y="586.9" width="72.35000000000002" height="45" rx="3" fill="#2e373c"/><text transform="translate(621.85,583.40) scale(0.942,1)" font-family="Liberation Sans" font-weight="normal" font-style="normal" font-size="11.92" fill="#a8aeb0" stroke="#a8aeb0" stroke-width="0.27" stroke-linejoin="round">Math1</text><text transform="translate(591.05,602.20) scale(0.840,1)" font-family="Liberation Sans" font-weight="normal" font-style="normal" font-size="11.92" fill="#8e979a" stroke="#8e979a" stroke-width="0.30" stroke-linejoin="round">500.00mV/</text><text transform="translate(592.75,620.20) scale(0.825,1)" font-family="Liberation Sans" font-weight="normal" font-style="normal" font-size="11.32" fill="#8e979a" stroke="#8e979a" stroke-width="0.30" stroke-linejoin="round">CH1+CH1</text><path d="M667,578.75 L694.5,578.75 L694.5,574.25 Q694.5,571.25 697.5,571.25 L735.6,571.25 Q738.6,571.25 738.6,574.25 L738.6,630.4 Q738.6,633.4 735.6,633.4 L667,633.4 Q664,633.4 664,630.4 L664,581.75 Q664,578.75 667,578.75 Z" fill="#4a5358"/><rect x="696.0" y="572.8" width="41.10000000000002" height="13.9" fill="#000"/><rect x="665.5" y="586.9" width="71.60000000000002" height="45" rx="3" fill="#2e373c"/><text transform="translate(699.60,583.40) scale(0.942,1)" font-family="Liberation Sans" font-weight="normal" font-style="normal" font-size="11.92" fill="#a8aeb0" stroke="#a8aeb0" stroke-width="0.27" stroke-linejoin="round">Math2</text><text transform="translate(668.80,602.20) scale(0.840,1)" font-family="Liberation Sans" font-weight="normal" font-style="normal" font-size="11.92" fill="#8e979a" stroke="#8e979a" stroke-width="0.30" stroke-linejoin="round">500.00mV/</text><text transform="translate(670.50,620.20) scale(0.825,1)" font-family="Liberation Sans" font-weight="normal" font-style="normal" font-size="11.32" fill="#8e979a" stroke="#8e979a" stroke-width="0.30" stroke-linejoin="round">CH1+CH1</text><path d="M744.6,578.75 L772.1,578.75 L772.1,574.25 Q772.1,571.25 775.1,571.25 L813.8,571.25 Q816.8,571.25 816.8,574.25 L816.8,630.4 Q816.8,633.4 813.8,633.4 L744.6,633.4 Q741.6,633.4 741.6,630.4 L741.6,581.75 Q741.6,578.75 744.6,578.75 Z" fill="#4a5358"/><rect x="773.6" y="572.8" width="41.69999999999993" height="13.9" fill="#000"/><rect x="743.1" y="586.9" width="72.19999999999993" height="45" rx="3" fill="#2e373c"/><text transform="translate(777.20,583.40) scale(0.942,1)" font-family="Liberation Sans" font-weight="normal" font-style="normal" font-size="11.92" fill="#a8aeb0" stroke="#a8aeb0" stroke-width="0.27" stroke-linejoin="round">Math3</text><text transform="translate(746.40,602.20) scale(0.840,1)" font-family="Liberation Sans" font-weight="normal" font-style="normal" font-size="11.92" fill="#8e979a" stroke="#8e979a" stroke-width="0.30" stroke-linejoin="round">500.00mV/</text><text transform="translate(748.10,620.20) scale(0.825,1)" font-family="Liberation Sans" font-weight="normal" font-style="normal" font-size="11.32" fill="#8e979a" stroke="#8e979a" stroke-width="0.30" stroke-linejoin="round">CH1+CH1</text><path d="M822.25,578.75 L849.75,578.75 L849.75,574.25 Q849.75,571.25 852.75,571.25 L891.5,571.25 Q894.5,571.25 894.5,574.25 L894.5,630.4 Q894.5,633.4 891.5,633.4 L822.25,633.4 Q819.25,633.4 819.25,630.4 L819.25,581.75 Q819.25,578.75 822.25,578.75 Z" fill="#4a5358"/><rect x="851.25" y="572.8" width="41.75" height="13.9" fill="#000"/><rect x="820.75" y="586.9" width="72.25" height="45" rx="3" fill="#2e373c"/><text transform="translate(854.85,583.40) scale(0.942,1)" font-family="Liberation Sans" font-weight="normal" font-style="normal" font-size="11.92" fill="#a8aeb0" stroke="#a8aeb0" stroke-width="0.27" stroke-linejoin="round">Math4</text><text transform="translate(824.05,602.20) scale(0.840,1)" font-family="Liberation Sans" font-weight="normal" font-style="normal" font-size="11.92" fill="#8e979a" stroke="#8e979a" stroke-width="0.30" stroke-linejoin="round">500.00mV/</text><text transform="translate(825.75,620.20) scale(0.825,1)" font-family="Liberation Sans" font-weight="normal" font-style="normal" font-size="11.32" fill="#8e979a" stroke="#8e979a" stroke-width="0.30" stroke-linejoin="round">CH1+CH1</text><text transform="translate(941.80,588.40) scale(0.736,1)" font-family="Liberation Sans" font-weight="bold" font-style="italic" font-size="15.12" fill="#e8e8e8">LXI</text><path d="M965.8,582.2 L972.2,576.4 L974.3,577.6 L974.3,587 L972.2,588.1 Z" fill="none" stroke="#b8baba" stroke-width="1.1" stroke-linejoin="round"/><path d="M971.6,577.5 L971.6,587.2 M968.5,582.2 L974,582.2" stroke="#9a9c9c" stroke-width="1"/><path d="M975.8,579.3 L981.4,585.3 M981.4,579.3 L975.8,585.3" stroke="#a8aaaa" stroke-width="0.9"/><text transform="translate(937.40,611.40) scale(0.934,1)" font-family="Liberation Sans" font-weight="normal" font-style="normal" font-size="13.37" fill="#e8eaea" stroke="#e8eaea" stroke-width="0.27" stroke-linejoin="round">15:36:58</text><text transform="translate(928.00,630.40) scale(1.011,1)" font-family="Liberation Sans" font-weight="normal" font-style="normal" font-size="13.11" fill="#e8eaea" stroke="#e8eaea" stroke-width="0.25" stroke-linejoin="round">2023/10/31</text>
</svg>
</body></html>
